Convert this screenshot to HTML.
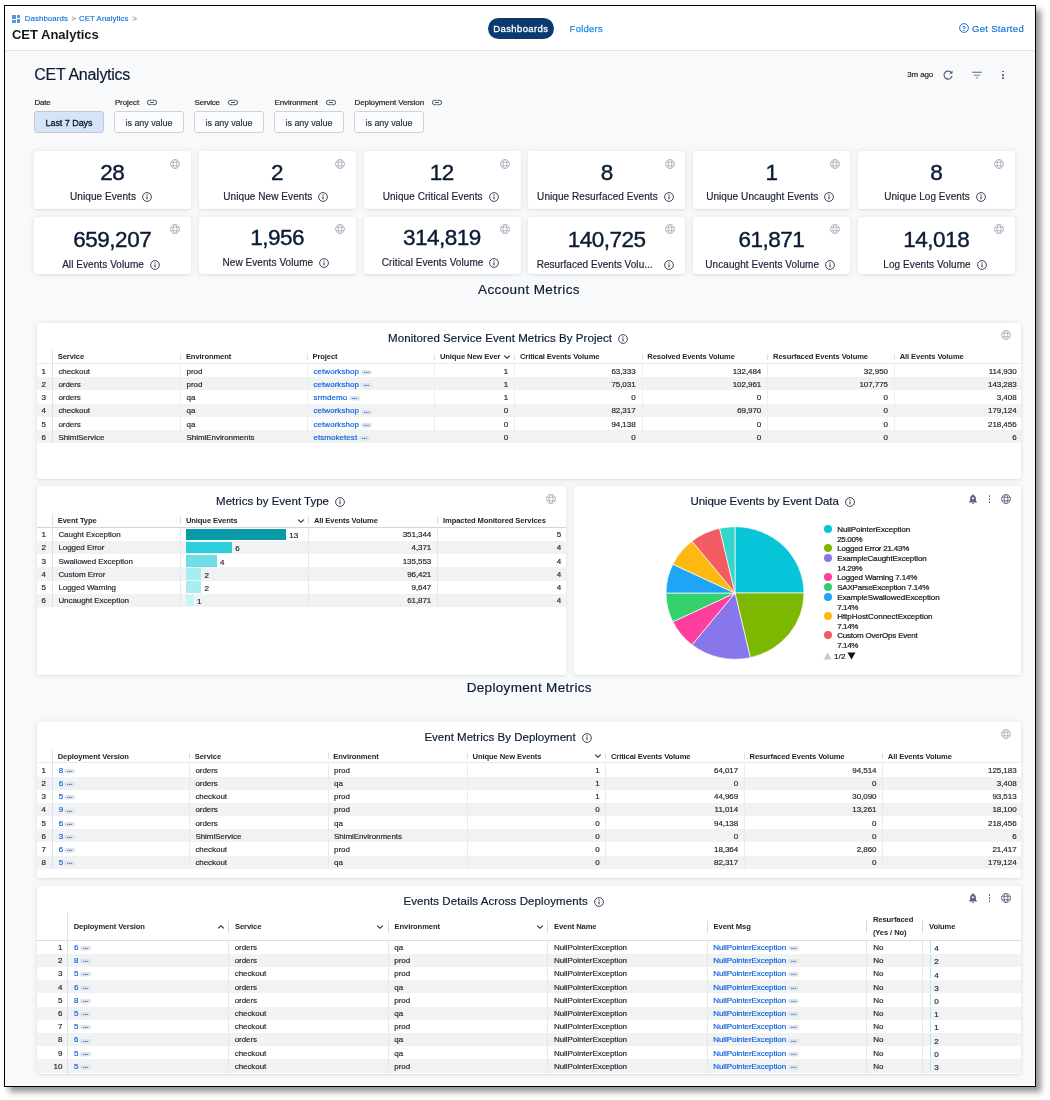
<!DOCTYPE html><html><head><meta charset="utf-8"><title>CET Analytics</title><style>html,body{margin:0;padding:0;background:#fff}body{width:1050px;height:1100px;position:relative;overflow:hidden;font-family:"Liberation Sans", sans-serif;}#tx{position:absolute;left:0;top:0;width:1050px;height:1100px;will-change:transform;-webkit-text-stroke:0.18px}#tx span{position:absolute;white-space:pre}</style></head><body>
<div style="position:absolute;left:4px;top:5px;width:1032px;height:1082px;background:#f8f9fa;box-sizing:border-box;border:1px solid #000;box-shadow:5px 5px 6px rgba(0,0,0,0.42);"></div>
<div style="position:absolute;left:5px;top:6px;width:1030px;height:44px;background:#fff;"></div>
<div style="position:absolute;left:5px;top:50px;width:1030px;height:1px;background:#e4e6ec;"></div>
<div style="position:absolute;left:5px;top:1085px;width:1030px;height:1px;background:#fff;"></div>
<div style="position:absolute;left:12px;top:15px;width:3.6px;height:3.6px;background:#5596e6;"></div>
<div style="position:absolute;left:12px;top:19.6px;width:3.6px;height:3.4px;background:#5596e6;"></div>
<div style="position:absolute;left:16.6px;top:15px;width:3.4px;height:2.6px;background:#5596e6;"></div>
<div style="position:absolute;left:16.6px;top:18.6px;width:3.4px;height:4.4px;background:#5596e6;"></div>
<div style="position:absolute;left:488px;top:18px;width:66px;height:21px;background:#0b3a70;border-radius:10.5px;"></div>
<svg style="position:absolute;left:957.80px;top:22.20px;" width="12" height="12" viewBox="0 0 12 12"><circle cx="6" cy="6" r="4.4" fill="none" stroke="#1a73d9" stroke-width="1"/></svg>
<svg style="position:absolute;left:941.80px;top:68.60px;" width="12" height="12" viewBox="0 0 12 12"><path d="M9.6 4.2A4 4 0 1 0 10 6.8" fill="none" stroke="#59627c" stroke-width="1.15"/><path d="M10.5 1.5V4.7H7.3z" fill="#59627c"/></svg>
<svg style="position:absolute;left:970.70px;top:69.50px;" width="12" height="10" viewBox="0 0 12 10"><path d="M1.3 2.3H10.7" stroke="#7a839b" stroke-width="1.3" fill="none"/><path d="M2.7 5.2H9.3M4.9 7.9H7.1" stroke="#7a839b" stroke-width="1" fill="none"/></svg>
<div style="position:absolute;left:1001.85px;top:70.75px;width:1.7px;height:1.7px;background:#525b75;border-radius:50%;"></div>
<div style="position:absolute;left:1001.85px;top:73.95px;width:1.7px;height:1.7px;background:#525b75;border-radius:50%;"></div>
<div style="position:absolute;left:1001.85px;top:77.15px;width:1.7px;height:1.7px;background:#525b75;border-radius:50%;"></div>
<div style="position:absolute;left:34px;top:111px;width:70px;height:22px;background:#d5e4f7;box-sizing:border-box;border:1px solid #c3c6cb;border-radius:3px;"></div>
<svg style="position:absolute;left:146.10px;top:98.90px;" width="12" height="7" viewBox="0 0 12 7"><g fill="none" stroke="#3a4252" stroke-width="0.95"><path d="M5.6 1.3H3.6a2.2 2.2 0 0 0 0 4.4H5.6M6.4 1.3h2a2.2 2.2 0 0 1 0 4.4H6.4M4.1 3.5h3.8"/></g></svg>
<div style="position:absolute;left:114px;top:111px;width:70px;height:22px;background:#fbfcfd;box-sizing:border-box;border:1px solid #cfd2d7;border-radius:3px;"></div>
<svg style="position:absolute;left:226.90px;top:98.90px;" width="12" height="7" viewBox="0 0 12 7"><g fill="none" stroke="#3a4252" stroke-width="0.95"><path d="M5.6 1.3H3.6a2.2 2.2 0 0 0 0 4.4H5.6M6.4 1.3h2a2.2 2.2 0 0 1 0 4.4H6.4M4.1 3.5h3.8"/></g></svg>
<div style="position:absolute;left:194px;top:111px;width:70px;height:22px;background:#fbfcfd;box-sizing:border-box;border:1px solid #cfd2d7;border-radius:3px;"></div>
<svg style="position:absolute;left:324.90px;top:98.90px;" width="12" height="7" viewBox="0 0 12 7"><g fill="none" stroke="#3a4252" stroke-width="0.95"><path d="M5.6 1.3H3.6a2.2 2.2 0 0 0 0 4.4H5.6M6.4 1.3h2a2.2 2.2 0 0 1 0 4.4H6.4M4.1 3.5h3.8"/></g></svg>
<div style="position:absolute;left:274px;top:111px;width:70px;height:22px;background:#fbfcfd;box-sizing:border-box;border:1px solid #cfd2d7;border-radius:3px;"></div>
<svg style="position:absolute;left:431.10px;top:98.90px;" width="12" height="7" viewBox="0 0 12 7"><g fill="none" stroke="#3a4252" stroke-width="0.95"><path d="M5.6 1.3H3.6a2.2 2.2 0 0 0 0 4.4H5.6M6.4 1.3h2a2.2 2.2 0 0 1 0 4.4H6.4M4.1 3.5h3.8"/></g></svg>
<div style="position:absolute;left:354px;top:111px;width:70px;height:22px;background:#fbfcfd;box-sizing:border-box;border:1px solid #cfd2d7;border-radius:3px;"></div>
<div style="position:absolute;left:34.0px;top:151px;width:157px;height:58px;background:#fff;border-radius:3px;box-shadow:0 0 6px rgba(50,55,50,0.09),0 1px 2px rgba(50,55,50,0.08);"></div>
<svg style="position:absolute;left:169.30px;top:157.70px;" width="12" height="12" viewBox="0 0 12 12"><g fill="none" stroke="#a9b0be" stroke-width="0.85"><circle cx="6" cy="6" r="4.5"/><ellipse cx="6" cy="6" rx="1.9" ry="4.5"/><path d="M2 4.3H10M2 7.7H10"/></g></svg>
<div style="position:absolute;left:198.8px;top:151px;width:157px;height:58px;background:#fff;border-radius:3px;box-shadow:0 0 6px rgba(50,55,50,0.09),0 1px 2px rgba(50,55,50,0.08);"></div>
<svg style="position:absolute;left:334.10px;top:157.70px;" width="12" height="12" viewBox="0 0 12 12"><g fill="none" stroke="#a9b0be" stroke-width="0.85"><circle cx="6" cy="6" r="4.5"/><ellipse cx="6" cy="6" rx="1.9" ry="4.5"/><path d="M2 4.3H10M2 7.7H10"/></g></svg>
<div style="position:absolute;left:363.6px;top:151px;width:157px;height:58px;background:#fff;border-radius:3px;box-shadow:0 0 6px rgba(50,55,50,0.09),0 1px 2px rgba(50,55,50,0.08);"></div>
<svg style="position:absolute;left:498.90px;top:157.70px;" width="12" height="12" viewBox="0 0 12 12"><g fill="none" stroke="#a9b0be" stroke-width="0.85"><circle cx="6" cy="6" r="4.5"/><ellipse cx="6" cy="6" rx="1.9" ry="4.5"/><path d="M2 4.3H10M2 7.7H10"/></g></svg>
<div style="position:absolute;left:528.4px;top:151px;width:157px;height:58px;background:#fff;border-radius:3px;box-shadow:0 0 6px rgba(50,55,50,0.09),0 1px 2px rgba(50,55,50,0.08);"></div>
<svg style="position:absolute;left:663.70px;top:157.70px;" width="12" height="12" viewBox="0 0 12 12"><g fill="none" stroke="#a9b0be" stroke-width="0.85"><circle cx="6" cy="6" r="4.5"/><ellipse cx="6" cy="6" rx="1.9" ry="4.5"/><path d="M2 4.3H10M2 7.7H10"/></g></svg>
<div style="position:absolute;left:693.2px;top:151px;width:157px;height:58px;background:#fff;border-radius:3px;box-shadow:0 0 6px rgba(50,55,50,0.09),0 1px 2px rgba(50,55,50,0.08);"></div>
<svg style="position:absolute;left:828.50px;top:157.70px;" width="12" height="12" viewBox="0 0 12 12"><g fill="none" stroke="#a9b0be" stroke-width="0.85"><circle cx="6" cy="6" r="4.5"/><ellipse cx="6" cy="6" rx="1.9" ry="4.5"/><path d="M2 4.3H10M2 7.7H10"/></g></svg>
<div style="position:absolute;left:858.0px;top:151px;width:157px;height:58px;background:#fff;border-radius:3px;box-shadow:0 0 6px rgba(50,55,50,0.09),0 1px 2px rgba(50,55,50,0.08);"></div>
<svg style="position:absolute;left:993.30px;top:157.70px;" width="12" height="12" viewBox="0 0 12 12"><g fill="none" stroke="#a9b0be" stroke-width="0.85"><circle cx="6" cy="6" r="4.5"/><ellipse cx="6" cy="6" rx="1.9" ry="4.5"/><path d="M2 4.3H10M2 7.7H10"/></g></svg>
<div style="position:absolute;left:34.0px;top:217px;width:157px;height:57px;background:#fff;border-radius:3px;box-shadow:0 0 6px rgba(50,55,50,0.09),0 1px 2px rgba(50,55,50,0.08);"></div>
<svg style="position:absolute;left:169.30px;top:223.00px;" width="12" height="12" viewBox="0 0 12 12"><g fill="none" stroke="#a9b0be" stroke-width="0.85"><circle cx="6" cy="6" r="4.5"/><ellipse cx="6" cy="6" rx="1.9" ry="4.5"/><path d="M2 4.3H10M2 7.7H10"/></g></svg>
<div style="position:absolute;left:198.8px;top:217px;width:157px;height:57px;background:#fff;border-radius:3px;box-shadow:0 0 6px rgba(50,55,50,0.09),0 1px 2px rgba(50,55,50,0.08);"></div>
<svg style="position:absolute;left:334.10px;top:223.00px;" width="12" height="12" viewBox="0 0 12 12"><g fill="none" stroke="#a9b0be" stroke-width="0.85"><circle cx="6" cy="6" r="4.5"/><ellipse cx="6" cy="6" rx="1.9" ry="4.5"/><path d="M2 4.3H10M2 7.7H10"/></g></svg>
<div style="position:absolute;left:363.6px;top:217px;width:157px;height:57px;background:#fff;border-radius:3px;box-shadow:0 0 6px rgba(50,55,50,0.09),0 1px 2px rgba(50,55,50,0.08);"></div>
<svg style="position:absolute;left:498.90px;top:223.00px;" width="12" height="12" viewBox="0 0 12 12"><g fill="none" stroke="#a9b0be" stroke-width="0.85"><circle cx="6" cy="6" r="4.5"/><ellipse cx="6" cy="6" rx="1.9" ry="4.5"/><path d="M2 4.3H10M2 7.7H10"/></g></svg>
<div style="position:absolute;left:528.4px;top:217px;width:157px;height:57px;background:#fff;border-radius:3px;box-shadow:0 0 6px rgba(50,55,50,0.09),0 1px 2px rgba(50,55,50,0.08);"></div>
<svg style="position:absolute;left:663.40px;top:258.60px;" width="12" height="12" viewBox="0 0 12 12"><circle cx="6" cy="6" r="4.4" fill="none" stroke="#0b1a33" stroke-width="0.8"/><path d="M6 5.4V8.3" stroke="#0b1a33" stroke-width="0.95"/><circle cx="6" cy="3.9" r="0.55" fill="#0b1a33"/></svg>
<svg style="position:absolute;left:663.70px;top:223.00px;" width="12" height="12" viewBox="0 0 12 12"><g fill="none" stroke="#a9b0be" stroke-width="0.85"><circle cx="6" cy="6" r="4.5"/><ellipse cx="6" cy="6" rx="1.9" ry="4.5"/><path d="M2 4.3H10M2 7.7H10"/></g></svg>
<div style="position:absolute;left:693.2px;top:217px;width:157px;height:57px;background:#fff;border-radius:3px;box-shadow:0 0 6px rgba(50,55,50,0.09),0 1px 2px rgba(50,55,50,0.08);"></div>
<svg style="position:absolute;left:828.50px;top:223.00px;" width="12" height="12" viewBox="0 0 12 12"><g fill="none" stroke="#a9b0be" stroke-width="0.85"><circle cx="6" cy="6" r="4.5"/><ellipse cx="6" cy="6" rx="1.9" ry="4.5"/><path d="M2 4.3H10M2 7.7H10"/></g></svg>
<div style="position:absolute;left:858.0px;top:217px;width:157px;height:57px;background:#fff;border-radius:3px;box-shadow:0 0 6px rgba(50,55,50,0.09),0 1px 2px rgba(50,55,50,0.08);"></div>
<svg style="position:absolute;left:993.30px;top:223.00px;" width="12" height="12" viewBox="0 0 12 12"><g fill="none" stroke="#a9b0be" stroke-width="0.85"><circle cx="6" cy="6" r="4.5"/><ellipse cx="6" cy="6" rx="1.9" ry="4.5"/><path d="M2 4.3H10M2 7.7H10"/></g></svg>
<div style="position:absolute;left:37px;top:323px;width:984px;height:156px;background:#fff;border-radius:3px;box-shadow:0 0 6px rgba(50,55,50,0.09),0 1px 2px rgba(50,55,50,0.08);"></div>
<svg style="position:absolute;left:617.10px;top:332.70px;" width="12" height="12" viewBox="0 0 12 12"><circle cx="6" cy="6" r="4.4" fill="none" stroke="#0b1a33" stroke-width="0.8"/><path d="M6 5.4V8.3" stroke="#0b1a33" stroke-width="0.95"/><circle cx="6" cy="3.9" r="0.55" fill="#0b1a33"/></svg>
<div style="position:absolute;left:37px;top:363.1px;width:984px;height:1px;background:#e9ebee;"></div>
<div style="position:absolute;left:37px;top:377.2px;width:984px;height:13.2px;background:#f0f2f3;"></div>
<div style="position:absolute;left:37px;top:403.6px;width:984px;height:13.2px;background:#f0f2f3;"></div>
<div style="position:absolute;left:37px;top:430.0px;width:984px;height:13.2px;background:#f0f2f3;"></div>
<div style="position:absolute;left:51.9px;top:350.3px;width:1px;height:92.9px;background:#dfe2e6;"></div>
<div style="position:absolute;left:180.1px;top:353.55px;width:1px;height:6.8px;background:#dfe2e7;"></div>
<div style="position:absolute;left:180.1px;top:364.1px;width:1px;height:79.1px;background:#eceef1;"></div>
<div style="position:absolute;left:306.7px;top:353.55px;width:1px;height:6.8px;background:#dfe2e7;"></div>
<div style="position:absolute;left:306.7px;top:364.1px;width:1px;height:79.1px;background:#eceef1;"></div>
<div style="position:absolute;left:434.1px;top:353.55px;width:1px;height:6.8px;background:#dfe2e7;"></div>
<div style="position:absolute;left:434.1px;top:364.1px;width:1px;height:79.1px;background:#eceef1;"></div>
<div style="position:absolute;left:514.1px;top:353.55px;width:1px;height:6.8px;background:#dfe2e7;"></div>
<div style="position:absolute;left:514.1px;top:364.1px;width:1px;height:79.1px;background:#eceef1;"></div>
<div style="position:absolute;left:641.5px;top:353.55px;width:1px;height:6.8px;background:#dfe2e7;"></div>
<div style="position:absolute;left:641.5px;top:364.1px;width:1px;height:79.1px;background:#eceef1;"></div>
<div style="position:absolute;left:767.2px;top:353.55px;width:1px;height:6.8px;background:#dfe2e7;"></div>
<div style="position:absolute;left:767.2px;top:364.1px;width:1px;height:79.1px;background:#eceef1;"></div>
<div style="position:absolute;left:893.9px;top:353.55px;width:1px;height:6.8px;background:#dfe2e7;"></div>
<div style="position:absolute;left:893.9px;top:364.1px;width:1px;height:79.1px;background:#eceef1;"></div>
<svg style="position:absolute;left:1000.00px;top:329.30px;" width="12" height="12" viewBox="0 0 12 12"><g fill="none" stroke="#a9b0be" stroke-width="0.85"><circle cx="6" cy="6" r="4.5"/><ellipse cx="6" cy="6" rx="1.9" ry="4.5"/><path d="M2 4.3H10M2 7.7H10"/></g></svg>
<svg style="position:absolute;left:502.50px;top:354.20px;" width="8" height="6" viewBox="0 0 8 6"><path d="M1.3 1.7L4 4.3L6.7 1.7" fill="none" stroke="#222" stroke-width="1.15"/></svg>
<div style="position:absolute;left:37px;top:486px;width:529px;height:188.70000000000005px;background:#fff;border-radius:3px;box-shadow:0 0 6px rgba(50,55,50,0.09),0 1px 2px rgba(50,55,50,0.08);"></div>
<svg style="position:absolute;left:334.00px;top:496.00px;" width="12" height="12" viewBox="0 0 12 12"><circle cx="6" cy="6" r="4.4" fill="none" stroke="#0b1a33" stroke-width="0.8"/><path d="M6 5.4V8.3" stroke="#0b1a33" stroke-width="0.95"/><circle cx="6" cy="3.9" r="0.55" fill="#0b1a33"/></svg>
<div style="position:absolute;left:37px;top:526.9px;width:529px;height:1px;background:#d0d4da;"></div>
<div style="position:absolute;left:37px;top:541.0px;width:529px;height:13.2px;background:#f0f2f3;"></div>
<div style="position:absolute;left:37px;top:567.4px;width:529px;height:13.2px;background:#f0f2f3;"></div>
<div style="position:absolute;left:37px;top:593.8px;width:529px;height:13.2px;background:#f0f2f3;"></div>
<div style="position:absolute;left:51.9px;top:514.2px;width:1px;height:92.8px;background:#dfe2e6;"></div>
<div style="position:absolute;left:180.1px;top:517.4px;width:1px;height:6.8px;background:#d6dae0;"></div>
<div style="position:absolute;left:180.1px;top:527.9px;width:1px;height:79.1px;background:#e6e8ec;"></div>
<div style="position:absolute;left:308.1px;top:517.4px;width:1px;height:6.8px;background:#d6dae0;"></div>
<div style="position:absolute;left:308.1px;top:527.9px;width:1px;height:79.1px;background:#e6e8ec;"></div>
<div style="position:absolute;left:437.2px;top:517.4px;width:1px;height:6.8px;background:#d6dae0;"></div>
<div style="position:absolute;left:437.2px;top:527.9px;width:1px;height:79.1px;background:#e6e8ec;"></div>
<svg style="position:absolute;left:544.50px;top:493.00px;" width="12" height="12" viewBox="0 0 12 12"><g fill="none" stroke="#a9b0be" stroke-width="0.85"><circle cx="6" cy="6" r="4.5"/><ellipse cx="6" cy="6" rx="1.9" ry="4.5"/><path d="M2 4.3H10M2 7.7H10"/></g></svg>
<svg style="position:absolute;left:297.00px;top:517.50px;" width="8" height="6" viewBox="0 0 8 6"><path d="M1.3 1.7L4 4.3L6.7 1.7" fill="none" stroke="#222" stroke-width="1.15"/></svg>
<div style="position:absolute;left:186px;top:528.6px;width:100.0px;height:11.6px;background:#0a9aa8;"></div>
<div style="position:absolute;left:186px;top:541.8px;width:46.2px;height:11.6px;background:#2dcfdc;"></div>
<div style="position:absolute;left:186px;top:555.0px;width:30.8px;height:11.6px;background:#6fdde5;"></div>
<div style="position:absolute;left:186px;top:568.2px;width:15.4px;height:11.6px;background:#a6ecf1;"></div>
<div style="position:absolute;left:186px;top:581.4px;width:15.4px;height:11.6px;background:#a6ecf1;"></div>
<div style="position:absolute;left:186px;top:594.6px;width:7.7px;height:11.6px;background:#c6f6f9;"></div>
<div style="position:absolute;left:574px;top:486px;width:447px;height:188.7px;background:#fff;border-radius:3px;box-shadow:0 0 6px rgba(50,55,50,0.09),0 1px 2px rgba(50,55,50,0.08);"></div>
<svg style="position:absolute;left:843.50px;top:496.10px;" width="12" height="12" viewBox="0 0 12 12"><circle cx="6" cy="6" r="4.4" fill="none" stroke="#0b1a33" stroke-width="0.8"/><path d="M6 5.4V8.3" stroke="#0b1a33" stroke-width="0.95"/><circle cx="6" cy="3.9" r="0.55" fill="#0b1a33"/></svg>
<svg style="position:absolute;left:966.90px;top:492.90px;" width="12" height="12" viewBox="0 0 12 12"><path d="M6 1.2c-.5 0-.8.3-.8.8v.3C3.9 2.7 3.1 3.9 3.1 5.3v2.4L2 8.9v.5h8v-.5L8.9 7.7V5.3c0-1.4-.8-2.6-2.1-3V2c0-.5-.3-.8-.8-.8z" fill="#59627a"/><path d="M5 10h2a1 1 0 0 1-2 0z" fill="#59627a"/><path d="M6 4v2.6M4.7 5.3h2.6" stroke="#fff" stroke-width="0.8"/></svg>
<div style="position:absolute;left:988.55px;top:495.15px;width:1.7px;height:1.7px;background:#525b75;border-radius:50%;"></div>
<div style="position:absolute;left:988.55px;top:498.05px;width:1.7px;height:1.7px;background:#525b75;border-radius:50%;"></div>
<div style="position:absolute;left:988.55px;top:500.95px;width:1.7px;height:1.7px;background:#525b75;border-radius:50%;"></div>
<svg style="position:absolute;left:1000.00px;top:492.60px;" width="12" height="12" viewBox="0 0 12 12"><g fill="none" stroke="#59627a" stroke-width="0.85"><circle cx="6" cy="6" r="4.5"/><ellipse cx="6" cy="6" rx="1.9" ry="4.5"/><path d="M2 4.3H10M2 7.7H10"/></g></svg>
<svg style="position:absolute;left:663.40px;top:523.00px;" width="144" height="140" viewBox="-72 -70 144 140"><path d="M0 0L0.00 -66.30A69 66.3 0 0 1 69.00 -0.00Z" fill="#08c4d8" stroke="#fff" stroke-width="0.7" stroke-linejoin="round"/><path d="M0 0L69.00 -0.00A69 66.3 0 0 1 15.35 64.64Z" fill="#7cb800" stroke="#fff" stroke-width="0.7" stroke-linejoin="round"/><path d="M0 0L15.35 64.64A69 66.3 0 0 1 -43.04 51.82Z" fill="#8877ea" stroke="#fff" stroke-width="0.7" stroke-linejoin="round"/><path d="M0 0L-43.04 51.82A69 66.3 0 0 1 -62.17 28.76Z" fill="#ff3f9f" stroke="#fff" stroke-width="0.7" stroke-linejoin="round"/><path d="M0 0L-62.17 28.76A69 66.3 0 0 1 -69.00 0.00Z" fill="#33d16b" stroke="#fff" stroke-width="0.7" stroke-linejoin="round"/><path d="M0 0L-69.00 0.00A69 66.3 0 0 1 -62.17 -28.76Z" fill="#1fa5f7" stroke="#fff" stroke-width="0.7" stroke-linejoin="round"/><path d="M0 0L-62.17 -28.76A69 66.3 0 0 1 -43.04 -51.82Z" fill="#fdb90f" stroke="#fff" stroke-width="0.7" stroke-linejoin="round"/><path d="M0 0L-43.04 -51.82A69 66.3 0 0 1 -15.39 -64.63Z" fill="#f25c62" stroke="#fff" stroke-width="0.7" stroke-linejoin="round"/><path d="M0 0L-15.39 -64.63A69 66.3 0 0 1 0.00 -66.30Z" fill="#33d6c9" stroke="#fff" stroke-width="0.7" stroke-linejoin="round"/></svg>
<div style="position:absolute;left:824.3px;top:525.0px;width:8px;height:8px;background:#08c4d8;border-radius:50%;"></div>
<div style="position:absolute;left:824.3px;top:543.8px;width:8px;height:8px;background:#7cb800;border-radius:50%;"></div>
<div style="position:absolute;left:824.3px;top:553.6px;width:8px;height:8px;background:#8877ea;border-radius:50%;"></div>
<div style="position:absolute;left:824.3px;top:572.8px;width:8px;height:8px;background:#ff3f9f;border-radius:50%;"></div>
<div style="position:absolute;left:824.3px;top:582.7px;width:8px;height:8px;background:#33d16b;border-radius:50%;"></div>
<div style="position:absolute;left:824.3px;top:592.8px;width:8px;height:8px;background:#1fa5f7;border-radius:50%;"></div>
<div style="position:absolute;left:824.3px;top:611.9px;width:8px;height:8px;background:#fdb90f;border-radius:50%;"></div>
<div style="position:absolute;left:824.3px;top:630.8px;width:8px;height:8px;background:#f25c62;border-radius:50%;"></div>
<svg style="position:absolute;left:823.00px;top:651.50px;" width="9" height="8" viewBox="0 0 9 8"><path d="M0.5 7.5L4.5 0.5L8.5 7.5Z" fill="#c9c9c9"/></svg>
<svg style="position:absolute;left:847.00px;top:652.00px;" width="9" height="8" viewBox="0 0 9 8"><path d="M0.5 0.5L4.5 7.5L8.5 0.5Z" fill="#111"/></svg>
<div style="position:absolute;left:37px;top:722px;width:984px;height:156px;background:#fff;border-radius:3px;box-shadow:0 0 6px rgba(50,55,50,0.09),0 1px 2px rgba(50,55,50,0.08);"></div>
<svg style="position:absolute;left:580.70px;top:731.60px;" width="12" height="12" viewBox="0 0 12 12"><circle cx="6" cy="6" r="4.4" fill="none" stroke="#0b1a33" stroke-width="0.8"/><path d="M6 5.4V8.3" stroke="#0b1a33" stroke-width="0.95"/><circle cx="6" cy="3.9" r="0.55" fill="#0b1a33"/></svg>
<div style="position:absolute;left:37px;top:762.4px;width:984px;height:1px;background:#e8eaed;"></div>
<div style="position:absolute;left:37px;top:776.5px;width:984px;height:13.2px;background:#f0f2f3;"></div>
<div style="position:absolute;left:37px;top:802.9px;width:984px;height:13.2px;background:#f0f2f3;"></div>
<div style="position:absolute;left:37px;top:829.3px;width:984px;height:13.2px;background:#f0f2f3;"></div>
<div style="position:absolute;left:37px;top:855.7px;width:984px;height:13.2px;background:#f0f2f3;"></div>
<div style="position:absolute;left:51.9px;top:749.2px;width:1px;height:119.7px;background:#dfe2e6;"></div>
<div style="position:absolute;left:188.9px;top:752.65px;width:1px;height:6.8px;background:#dde0e5;"></div>
<div style="position:absolute;left:188.9px;top:763.4px;width:1px;height:105.5px;background:#e9ebee;"></div>
<div style="position:absolute;left:327.5px;top:752.65px;width:1px;height:6.8px;background:#dde0e5;"></div>
<div style="position:absolute;left:327.5px;top:763.4px;width:1px;height:105.5px;background:#e9ebee;"></div>
<div style="position:absolute;left:466.8px;top:752.65px;width:1px;height:6.8px;background:#dde0e5;"></div>
<div style="position:absolute;left:466.8px;top:763.4px;width:1px;height:105.5px;background:#e9ebee;"></div>
<div style="position:absolute;left:605.1px;top:752.65px;width:1px;height:6.8px;background:#dde0e5;"></div>
<div style="position:absolute;left:605.1px;top:763.4px;width:1px;height:105.5px;background:#e9ebee;"></div>
<div style="position:absolute;left:743.7px;top:752.65px;width:1px;height:6.8px;background:#dde0e5;"></div>
<div style="position:absolute;left:743.7px;top:763.4px;width:1px;height:105.5px;background:#e9ebee;"></div>
<div style="position:absolute;left:882.0px;top:752.65px;width:1px;height:6.8px;background:#dde0e5;"></div>
<div style="position:absolute;left:882.0px;top:763.4px;width:1px;height:105.5px;background:#e9ebee;"></div>
<svg style="position:absolute;left:1000.00px;top:728.00px;" width="12" height="12" viewBox="0 0 12 12"><g fill="none" stroke="#a9b0be" stroke-width="0.85"><circle cx="6" cy="6" r="4.5"/><ellipse cx="6" cy="6" rx="1.9" ry="4.5"/><path d="M2 4.3H10M2 7.7H10"/></g></svg>
<svg style="position:absolute;left:593.60px;top:753.20px;" width="8" height="6" viewBox="0 0 8 6"><path d="M1.3 1.7L4 4.3L6.7 1.7" fill="none" stroke="#222" stroke-width="1.15"/></svg>
<div style="position:absolute;left:37px;top:886px;width:984px;height:188px;background:#fff;border-radius:3px;box-shadow:0 0 6px rgba(50,55,50,0.09),0 1px 2px rgba(50,55,50,0.08);"></div>
<svg style="position:absolute;left:592.80px;top:895.80px;" width="12" height="12" viewBox="0 0 12 12"><circle cx="6" cy="6" r="4.4" fill="none" stroke="#0b1a33" stroke-width="0.8"/><path d="M6 5.4V8.3" stroke="#0b1a33" stroke-width="0.95"/><circle cx="6" cy="3.9" r="0.55" fill="#0b1a33"/></svg>
<div style="position:absolute;left:37px;top:939.7px;width:984px;height:1px;background:#dcdfe3;"></div>
<div style="position:absolute;left:37px;top:953.8px;width:984px;height:13.2px;background:#f0f2f3;"></div>
<div style="position:absolute;left:37px;top:980.2px;width:984px;height:13.2px;background:#f0f2f3;"></div>
<div style="position:absolute;left:37px;top:1006.6px;width:984px;height:13.2px;background:#f0f2f3;"></div>
<div style="position:absolute;left:37px;top:1033.0px;width:984px;height:13.2px;background:#f0f2f3;"></div>
<div style="position:absolute;left:37px;top:1059.4px;width:984px;height:13.2px;background:#f0f2f3;"></div>
<div style="position:absolute;left:66.9px;top:913.2px;width:1px;height:160.8px;background:#dfe2e6;"></div>
<div style="position:absolute;left:228.2px;top:920.7px;width:1px;height:12px;background:#d6dae0;"></div>
<div style="position:absolute;left:228.2px;top:940.7px;width:1px;height:133.3px;background:#e6e8ec;"></div>
<div style="position:absolute;left:387.8px;top:920.7px;width:1px;height:12px;background:#d6dae0;"></div>
<div style="position:absolute;left:387.8px;top:940.7px;width:1px;height:133.3px;background:#e6e8ec;"></div>
<div style="position:absolute;left:547.2px;top:920.7px;width:1px;height:12px;background:#d6dae0;"></div>
<div style="position:absolute;left:547.2px;top:940.7px;width:1px;height:133.3px;background:#e6e8ec;"></div>
<div style="position:absolute;left:706.8px;top:920.7px;width:1px;height:12px;background:#d6dae0;"></div>
<div style="position:absolute;left:706.8px;top:940.7px;width:1px;height:133.3px;background:#e6e8ec;"></div>
<div style="position:absolute;left:866.2px;top:920.7px;width:1px;height:12px;background:#d6dae0;"></div>
<div style="position:absolute;left:866.2px;top:940.7px;width:1px;height:133.3px;background:#e6e8ec;"></div>
<div style="position:absolute;left:922.2px;top:920.7px;width:1px;height:12px;background:#d6dae0;"></div>
<div style="position:absolute;left:922.2px;top:940.7px;width:1px;height:133.3px;background:#e6e8ec;"></div>
<svg style="position:absolute;left:966.90px;top:892.00px;" width="12" height="12" viewBox="0 0 12 12"><path d="M6 1.2c-.5 0-.8.3-.8.8v.3C3.9 2.7 3.1 3.9 3.1 5.3v2.4L2 8.9v.5h8v-.5L8.9 7.7V5.3c0-1.4-.8-2.6-2.1-3V2c0-.5-.3-.8-.8-.8z" fill="#59627a"/><path d="M5 10h2a1 1 0 0 1-2 0z" fill="#59627a"/><path d="M6 4v2.6M4.7 5.3h2.6" stroke="#fff" stroke-width="0.8"/></svg>
<div style="position:absolute;left:988.55px;top:894.25px;width:1.7px;height:1.7px;background:#525b75;border-radius:50%;"></div>
<div style="position:absolute;left:988.55px;top:897.15px;width:1.7px;height:1.7px;background:#525b75;border-radius:50%;"></div>
<div style="position:absolute;left:988.55px;top:900.05px;width:1.7px;height:1.7px;background:#525b75;border-radius:50%;"></div>
<svg style="position:absolute;left:1000.00px;top:892.00px;" width="12" height="12" viewBox="0 0 12 12"><g fill="none" stroke="#59627a" stroke-width="0.85"><circle cx="6" cy="6" r="4.5"/><ellipse cx="6" cy="6" rx="1.9" ry="4.5"/><path d="M2 4.3H10M2 7.7H10"/></g></svg>
<svg style="position:absolute;left:216.70px;top:923.50px;" width="8" height="6" viewBox="0 0 8 6"><path d="M1.3 4.3L4 1.7L6.7 4.3" fill="none" stroke="#222" stroke-width="1.15"/></svg>
<svg style="position:absolute;left:376.00px;top:924.00px;" width="8" height="6" viewBox="0 0 8 6"><path d="M1.3 1.7L4 4.3L6.7 1.7" fill="none" stroke="#222" stroke-width="1.15"/></svg>
<svg style="position:absolute;left:536.00px;top:924.00px;" width="8" height="6" viewBox="0 0 8 6"><path d="M1.3 1.7L4 4.3L6.7 1.7" fill="none" stroke="#222" stroke-width="1.15"/></svg>
<div style="position:absolute;left:929.6px;top:941.4px;width:1.2px;height:11.6px;background:#a6ecf1;"></div>
<div style="position:absolute;left:929.6px;top:954.6px;width:1.2px;height:11.6px;background:#a6ecf1;"></div>
<div style="position:absolute;left:929.6px;top:967.8px;width:1.2px;height:11.6px;background:#a6ecf1;"></div>
<div style="position:absolute;left:929.6px;top:981.0px;width:1.2px;height:11.6px;background:#a6ecf1;"></div>
<div style="position:absolute;left:929.6px;top:994.2px;width:1.2px;height:11.6px;background:#a6ecf1;"></div>
<div style="position:absolute;left:929.6px;top:1007.4px;width:1.2px;height:11.6px;background:#a6ecf1;"></div>
<div style="position:absolute;left:929.6px;top:1020.6px;width:1.2px;height:11.6px;background:#a6ecf1;"></div>
<div style="position:absolute;left:929.6px;top:1033.8px;width:1.2px;height:11.6px;background:#a6ecf1;"></div>
<div style="position:absolute;left:929.6px;top:1047.0px;width:1.2px;height:11.6px;background:#a6ecf1;"></div>
<div style="position:absolute;left:929.6px;top:1060.2px;width:1.2px;height:11.6px;background:#a6ecf1;"></div>
<svg style="position:absolute;left:140.94px;top:190.70px;" width="12" height="12" viewBox="0 0 12 12"><circle cx="6" cy="6" r="4.4" fill="none" stroke="#0b1a33" stroke-width="0.8"/><path d="M6 5.4V8.3" stroke="#0b1a33" stroke-width="0.95"/><circle cx="6" cy="3.9" r="0.55" fill="#0b1a33"/></svg>
<svg style="position:absolute;left:317.27px;top:190.70px;" width="12" height="12" viewBox="0 0 12 12"><circle cx="6" cy="6" r="4.4" fill="none" stroke="#0b1a33" stroke-width="0.8"/><path d="M6 5.4V8.3" stroke="#0b1a33" stroke-width="0.95"/><circle cx="6" cy="3.9" r="0.55" fill="#0b1a33"/></svg>
<svg style="position:absolute;left:487.52px;top:190.70px;" width="12" height="12" viewBox="0 0 12 12"><circle cx="6" cy="6" r="4.4" fill="none" stroke="#0b1a33" stroke-width="0.8"/><path d="M6 5.4V8.3" stroke="#0b1a33" stroke-width="0.95"/><circle cx="6" cy="3.9" r="0.55" fill="#0b1a33"/></svg>
<svg style="position:absolute;left:662.69px;top:190.70px;" width="12" height="12" viewBox="0 0 12 12"><circle cx="6" cy="6" r="4.4" fill="none" stroke="#0b1a33" stroke-width="0.8"/><path d="M6 5.4V8.3" stroke="#0b1a33" stroke-width="0.95"/><circle cx="6" cy="3.9" r="0.55" fill="#0b1a33"/></svg>
<svg style="position:absolute;left:823.25px;top:190.70px;" width="12" height="12" viewBox="0 0 12 12"><circle cx="6" cy="6" r="4.4" fill="none" stroke="#0b1a33" stroke-width="0.8"/><path d="M6 5.4V8.3" stroke="#0b1a33" stroke-width="0.95"/><circle cx="6" cy="3.9" r="0.55" fill="#0b1a33"/></svg>
<svg style="position:absolute;left:974.82px;top:190.70px;" width="12" height="12" viewBox="0 0 12 12"><circle cx="6" cy="6" r="4.4" fill="none" stroke="#0b1a33" stroke-width="0.8"/><path d="M6 5.4V8.3" stroke="#0b1a33" stroke-width="0.95"/><circle cx="6" cy="3.9" r="0.55" fill="#0b1a33"/></svg>
<svg style="position:absolute;left:148.86px;top:258.70px;" width="12" height="12" viewBox="0 0 12 12"><circle cx="6" cy="6" r="4.4" fill="none" stroke="#0b1a33" stroke-width="0.8"/><path d="M6 5.4V8.3" stroke="#0b1a33" stroke-width="0.95"/><circle cx="6" cy="3.9" r="0.55" fill="#0b1a33"/></svg>
<svg style="position:absolute;left:318.11px;top:256.70px;" width="12" height="12" viewBox="0 0 12 12"><circle cx="6" cy="6" r="4.4" fill="none" stroke="#0b1a33" stroke-width="0.8"/><path d="M6 5.4V8.3" stroke="#0b1a33" stroke-width="0.95"/><circle cx="6" cy="3.9" r="0.55" fill="#0b1a33"/></svg>
<svg style="position:absolute;left:488.36px;top:256.70px;" width="12" height="12" viewBox="0 0 12 12"><circle cx="6" cy="6" r="4.4" fill="none" stroke="#0b1a33" stroke-width="0.8"/><path d="M6 5.4V8.3" stroke="#0b1a33" stroke-width="0.95"/><circle cx="6" cy="3.9" r="0.55" fill="#0b1a33"/></svg>
<svg style="position:absolute;left:824.08px;top:258.70px;" width="12" height="12" viewBox="0 0 12 12"><circle cx="6" cy="6" r="4.4" fill="none" stroke="#0b1a33" stroke-width="0.8"/><path d="M6 5.4V8.3" stroke="#0b1a33" stroke-width="0.95"/><circle cx="6" cy="3.9" r="0.55" fill="#0b1a33"/></svg>
<svg style="position:absolute;left:975.65px;top:258.70px;" width="12" height="12" viewBox="0 0 12 12"><circle cx="6" cy="6" r="4.4" fill="none" stroke="#0b1a33" stroke-width="0.8"/><path d="M6 5.4V8.3" stroke="#0b1a33" stroke-width="0.95"/><circle cx="6" cy="3.9" r="0.55" fill="#0b1a33"/></svg>
<svg style="position:absolute;left:360.92px;top:369.90px;" width="11" height="5" viewBox="0 0 11 5"><rect x="0" y="0" width="11" height="4.6" rx="2.3" fill="#e0e2e6"/><circle cx="3.7" cy="2.4" r="0.62" fill="#2f76e0"/><circle cx="5.5" cy="2.4" r="0.62" fill="#2f76e0"/><circle cx="7.3" cy="2.4" r="0.62" fill="#2f76e0"/></svg>
<svg style="position:absolute;left:360.92px;top:383.10px;" width="11" height="5" viewBox="0 0 11 5"><rect x="0" y="0" width="11" height="4.6" rx="2.3" fill="#e0e2e6"/><circle cx="3.7" cy="2.4" r="0.62" fill="#2f76e0"/><circle cx="5.5" cy="2.4" r="0.62" fill="#2f76e0"/><circle cx="7.3" cy="2.4" r="0.62" fill="#2f76e0"/></svg>
<svg style="position:absolute;left:349.14px;top:396.30px;" width="11" height="5" viewBox="0 0 11 5"><rect x="0" y="0" width="11" height="4.6" rx="2.3" fill="#e0e2e6"/><circle cx="3.7" cy="2.4" r="0.62" fill="#2f76e0"/><circle cx="5.5" cy="2.4" r="0.62" fill="#2f76e0"/><circle cx="7.3" cy="2.4" r="0.62" fill="#2f76e0"/></svg>
<svg style="position:absolute;left:360.92px;top:409.50px;" width="11" height="5" viewBox="0 0 11 5"><rect x="0" y="0" width="11" height="4.6" rx="2.3" fill="#e0e2e6"/><circle cx="3.7" cy="2.4" r="0.62" fill="#2f76e0"/><circle cx="5.5" cy="2.4" r="0.62" fill="#2f76e0"/><circle cx="7.3" cy="2.4" r="0.62" fill="#2f76e0"/></svg>
<svg style="position:absolute;left:360.92px;top:422.70px;" width="11" height="5" viewBox="0 0 11 5"><rect x="0" y="0" width="11" height="4.6" rx="2.3" fill="#e0e2e6"/><circle cx="3.7" cy="2.4" r="0.62" fill="#2f76e0"/><circle cx="5.5" cy="2.4" r="0.62" fill="#2f76e0"/><circle cx="7.3" cy="2.4" r="0.62" fill="#2f76e0"/></svg>
<svg style="position:absolute;left:359.14px;top:435.90px;" width="11" height="5" viewBox="0 0 11 5"><rect x="0" y="0" width="11" height="4.6" rx="2.3" fill="#e0e2e6"/><circle cx="3.7" cy="2.4" r="0.62" fill="#2f76e0"/><circle cx="5.5" cy="2.4" r="0.62" fill="#2f76e0"/><circle cx="7.3" cy="2.4" r="0.62" fill="#2f76e0"/></svg>
<svg style="position:absolute;left:64.45px;top:768.90px;" width="11" height="5" viewBox="0 0 11 5"><rect x="0" y="0" width="11" height="4.6" rx="2.3" fill="#e0e2e6"/><circle cx="3.7" cy="2.4" r="0.62" fill="#2f76e0"/><circle cx="5.5" cy="2.4" r="0.62" fill="#2f76e0"/><circle cx="7.3" cy="2.4" r="0.62" fill="#2f76e0"/></svg>
<svg style="position:absolute;left:64.45px;top:782.12px;" width="11" height="5" viewBox="0 0 11 5"><rect x="0" y="0" width="11" height="4.6" rx="2.3" fill="#e0e2e6"/><circle cx="3.7" cy="2.4" r="0.62" fill="#2f76e0"/><circle cx="5.5" cy="2.4" r="0.62" fill="#2f76e0"/><circle cx="7.3" cy="2.4" r="0.62" fill="#2f76e0"/></svg>
<svg style="position:absolute;left:64.45px;top:795.34px;" width="11" height="5" viewBox="0 0 11 5"><rect x="0" y="0" width="11" height="4.6" rx="2.3" fill="#e0e2e6"/><circle cx="3.7" cy="2.4" r="0.62" fill="#2f76e0"/><circle cx="5.5" cy="2.4" r="0.62" fill="#2f76e0"/><circle cx="7.3" cy="2.4" r="0.62" fill="#2f76e0"/></svg>
<svg style="position:absolute;left:64.45px;top:808.56px;" width="11" height="5" viewBox="0 0 11 5"><rect x="0" y="0" width="11" height="4.6" rx="2.3" fill="#e0e2e6"/><circle cx="3.7" cy="2.4" r="0.62" fill="#2f76e0"/><circle cx="5.5" cy="2.4" r="0.62" fill="#2f76e0"/><circle cx="7.3" cy="2.4" r="0.62" fill="#2f76e0"/></svg>
<svg style="position:absolute;left:64.45px;top:821.78px;" width="11" height="5" viewBox="0 0 11 5"><rect x="0" y="0" width="11" height="4.6" rx="2.3" fill="#e0e2e6"/><circle cx="3.7" cy="2.4" r="0.62" fill="#2f76e0"/><circle cx="5.5" cy="2.4" r="0.62" fill="#2f76e0"/><circle cx="7.3" cy="2.4" r="0.62" fill="#2f76e0"/></svg>
<svg style="position:absolute;left:64.45px;top:835.00px;" width="11" height="5" viewBox="0 0 11 5"><rect x="0" y="0" width="11" height="4.6" rx="2.3" fill="#e0e2e6"/><circle cx="3.7" cy="2.4" r="0.62" fill="#2f76e0"/><circle cx="5.5" cy="2.4" r="0.62" fill="#2f76e0"/><circle cx="7.3" cy="2.4" r="0.62" fill="#2f76e0"/></svg>
<svg style="position:absolute;left:64.45px;top:848.22px;" width="11" height="5" viewBox="0 0 11 5"><rect x="0" y="0" width="11" height="4.6" rx="2.3" fill="#e0e2e6"/><circle cx="3.7" cy="2.4" r="0.62" fill="#2f76e0"/><circle cx="5.5" cy="2.4" r="0.62" fill="#2f76e0"/><circle cx="7.3" cy="2.4" r="0.62" fill="#2f76e0"/></svg>
<svg style="position:absolute;left:64.45px;top:861.44px;" width="11" height="5" viewBox="0 0 11 5"><rect x="0" y="0" width="11" height="4.6" rx="2.3" fill="#e0e2e6"/><circle cx="3.7" cy="2.4" r="0.62" fill="#2f76e0"/><circle cx="5.5" cy="2.4" r="0.62" fill="#2f76e0"/><circle cx="7.3" cy="2.4" r="0.62" fill="#2f76e0"/></svg>
<svg style="position:absolute;left:79.65px;top:946.00px;" width="11" height="5" viewBox="0 0 11 5"><rect x="0" y="0" width="11" height="4.6" rx="2.3" fill="#e0e2e6"/><circle cx="3.7" cy="2.4" r="0.62" fill="#2f76e0"/><circle cx="5.5" cy="2.4" r="0.62" fill="#2f76e0"/><circle cx="7.3" cy="2.4" r="0.62" fill="#2f76e0"/></svg>
<svg style="position:absolute;left:788.00px;top:946.00px;" width="11" height="5" viewBox="0 0 11 5"><rect x="0" y="0" width="11" height="4.6" rx="2.3" fill="#e0e2e6"/><circle cx="3.7" cy="2.4" r="0.62" fill="#2f76e0"/><circle cx="5.5" cy="2.4" r="0.62" fill="#2f76e0"/><circle cx="7.3" cy="2.4" r="0.62" fill="#2f76e0"/></svg>
<svg style="position:absolute;left:79.65px;top:959.22px;" width="11" height="5" viewBox="0 0 11 5"><rect x="0" y="0" width="11" height="4.6" rx="2.3" fill="#e0e2e6"/><circle cx="3.7" cy="2.4" r="0.62" fill="#2f76e0"/><circle cx="5.5" cy="2.4" r="0.62" fill="#2f76e0"/><circle cx="7.3" cy="2.4" r="0.62" fill="#2f76e0"/></svg>
<svg style="position:absolute;left:788.00px;top:959.22px;" width="11" height="5" viewBox="0 0 11 5"><rect x="0" y="0" width="11" height="4.6" rx="2.3" fill="#e0e2e6"/><circle cx="3.7" cy="2.4" r="0.62" fill="#2f76e0"/><circle cx="5.5" cy="2.4" r="0.62" fill="#2f76e0"/><circle cx="7.3" cy="2.4" r="0.62" fill="#2f76e0"/></svg>
<svg style="position:absolute;left:79.65px;top:972.44px;" width="11" height="5" viewBox="0 0 11 5"><rect x="0" y="0" width="11" height="4.6" rx="2.3" fill="#e0e2e6"/><circle cx="3.7" cy="2.4" r="0.62" fill="#2f76e0"/><circle cx="5.5" cy="2.4" r="0.62" fill="#2f76e0"/><circle cx="7.3" cy="2.4" r="0.62" fill="#2f76e0"/></svg>
<svg style="position:absolute;left:788.00px;top:972.44px;" width="11" height="5" viewBox="0 0 11 5"><rect x="0" y="0" width="11" height="4.6" rx="2.3" fill="#e0e2e6"/><circle cx="3.7" cy="2.4" r="0.62" fill="#2f76e0"/><circle cx="5.5" cy="2.4" r="0.62" fill="#2f76e0"/><circle cx="7.3" cy="2.4" r="0.62" fill="#2f76e0"/></svg>
<svg style="position:absolute;left:79.65px;top:985.66px;" width="11" height="5" viewBox="0 0 11 5"><rect x="0" y="0" width="11" height="4.6" rx="2.3" fill="#e0e2e6"/><circle cx="3.7" cy="2.4" r="0.62" fill="#2f76e0"/><circle cx="5.5" cy="2.4" r="0.62" fill="#2f76e0"/><circle cx="7.3" cy="2.4" r="0.62" fill="#2f76e0"/></svg>
<svg style="position:absolute;left:788.00px;top:985.66px;" width="11" height="5" viewBox="0 0 11 5"><rect x="0" y="0" width="11" height="4.6" rx="2.3" fill="#e0e2e6"/><circle cx="3.7" cy="2.4" r="0.62" fill="#2f76e0"/><circle cx="5.5" cy="2.4" r="0.62" fill="#2f76e0"/><circle cx="7.3" cy="2.4" r="0.62" fill="#2f76e0"/></svg>
<svg style="position:absolute;left:79.65px;top:998.88px;" width="11" height="5" viewBox="0 0 11 5"><rect x="0" y="0" width="11" height="4.6" rx="2.3" fill="#e0e2e6"/><circle cx="3.7" cy="2.4" r="0.62" fill="#2f76e0"/><circle cx="5.5" cy="2.4" r="0.62" fill="#2f76e0"/><circle cx="7.3" cy="2.4" r="0.62" fill="#2f76e0"/></svg>
<svg style="position:absolute;left:788.00px;top:998.88px;" width="11" height="5" viewBox="0 0 11 5"><rect x="0" y="0" width="11" height="4.6" rx="2.3" fill="#e0e2e6"/><circle cx="3.7" cy="2.4" r="0.62" fill="#2f76e0"/><circle cx="5.5" cy="2.4" r="0.62" fill="#2f76e0"/><circle cx="7.3" cy="2.4" r="0.62" fill="#2f76e0"/></svg>
<svg style="position:absolute;left:79.65px;top:1012.10px;" width="11" height="5" viewBox="0 0 11 5"><rect x="0" y="0" width="11" height="4.6" rx="2.3" fill="#e0e2e6"/><circle cx="3.7" cy="2.4" r="0.62" fill="#2f76e0"/><circle cx="5.5" cy="2.4" r="0.62" fill="#2f76e0"/><circle cx="7.3" cy="2.4" r="0.62" fill="#2f76e0"/></svg>
<svg style="position:absolute;left:788.00px;top:1012.10px;" width="11" height="5" viewBox="0 0 11 5"><rect x="0" y="0" width="11" height="4.6" rx="2.3" fill="#e0e2e6"/><circle cx="3.7" cy="2.4" r="0.62" fill="#2f76e0"/><circle cx="5.5" cy="2.4" r="0.62" fill="#2f76e0"/><circle cx="7.3" cy="2.4" r="0.62" fill="#2f76e0"/></svg>
<svg style="position:absolute;left:79.65px;top:1025.32px;" width="11" height="5" viewBox="0 0 11 5"><rect x="0" y="0" width="11" height="4.6" rx="2.3" fill="#e0e2e6"/><circle cx="3.7" cy="2.4" r="0.62" fill="#2f76e0"/><circle cx="5.5" cy="2.4" r="0.62" fill="#2f76e0"/><circle cx="7.3" cy="2.4" r="0.62" fill="#2f76e0"/></svg>
<svg style="position:absolute;left:788.00px;top:1025.32px;" width="11" height="5" viewBox="0 0 11 5"><rect x="0" y="0" width="11" height="4.6" rx="2.3" fill="#e0e2e6"/><circle cx="3.7" cy="2.4" r="0.62" fill="#2f76e0"/><circle cx="5.5" cy="2.4" r="0.62" fill="#2f76e0"/><circle cx="7.3" cy="2.4" r="0.62" fill="#2f76e0"/></svg>
<svg style="position:absolute;left:79.65px;top:1038.54px;" width="11" height="5" viewBox="0 0 11 5"><rect x="0" y="0" width="11" height="4.6" rx="2.3" fill="#e0e2e6"/><circle cx="3.7" cy="2.4" r="0.62" fill="#2f76e0"/><circle cx="5.5" cy="2.4" r="0.62" fill="#2f76e0"/><circle cx="7.3" cy="2.4" r="0.62" fill="#2f76e0"/></svg>
<svg style="position:absolute;left:788.00px;top:1038.54px;" width="11" height="5" viewBox="0 0 11 5"><rect x="0" y="0" width="11" height="4.6" rx="2.3" fill="#e0e2e6"/><circle cx="3.7" cy="2.4" r="0.62" fill="#2f76e0"/><circle cx="5.5" cy="2.4" r="0.62" fill="#2f76e0"/><circle cx="7.3" cy="2.4" r="0.62" fill="#2f76e0"/></svg>
<svg style="position:absolute;left:79.65px;top:1051.76px;" width="11" height="5" viewBox="0 0 11 5"><rect x="0" y="0" width="11" height="4.6" rx="2.3" fill="#e0e2e6"/><circle cx="3.7" cy="2.4" r="0.62" fill="#2f76e0"/><circle cx="5.5" cy="2.4" r="0.62" fill="#2f76e0"/><circle cx="7.3" cy="2.4" r="0.62" fill="#2f76e0"/></svg>
<svg style="position:absolute;left:788.00px;top:1051.76px;" width="11" height="5" viewBox="0 0 11 5"><rect x="0" y="0" width="11" height="4.6" rx="2.3" fill="#e0e2e6"/><circle cx="3.7" cy="2.4" r="0.62" fill="#2f76e0"/><circle cx="5.5" cy="2.4" r="0.62" fill="#2f76e0"/><circle cx="7.3" cy="2.4" r="0.62" fill="#2f76e0"/></svg>
<svg style="position:absolute;left:79.65px;top:1064.98px;" width="11" height="5" viewBox="0 0 11 5"><rect x="0" y="0" width="11" height="4.6" rx="2.3" fill="#e0e2e6"/><circle cx="3.7" cy="2.4" r="0.62" fill="#2f76e0"/><circle cx="5.5" cy="2.4" r="0.62" fill="#2f76e0"/><circle cx="7.3" cy="2.4" r="0.62" fill="#2f76e0"/></svg>
<svg style="position:absolute;left:788.00px;top:1064.98px;" width="11" height="5" viewBox="0 0 11 5"><rect x="0" y="0" width="11" height="4.6" rx="2.3" fill="#e0e2e6"/><circle cx="3.7" cy="2.4" r="0.62" fill="#2f76e0"/><circle cx="5.5" cy="2.4" r="0.62" fill="#2f76e0"/><circle cx="7.3" cy="2.4" r="0.62" fill="#2f76e0"/></svg>
<div id="tx">
<span style="left:24.80px;top:14px;font-size:7.8px;line-height:10px;color:#1a73d9;letter-spacing:0.105px;">Dashboards</span>
<span style="left:71.50px;top:14px;font-size:7.8px;line-height:10px;color:#8a8f98;">&gt;</span>
<span style="left:79.10px;top:14px;font-size:7.8px;line-height:10px;color:#1a73d9;letter-spacing:0.085px;">CET Analytics</span>
<span style="left:132.50px;top:14px;font-size:7.8px;line-height:10px;color:#8a8f98;">&gt;</span>
<span style="left:11.90px;top:27px;font-size:13px;line-height:16px;color:#16181d;font-weight:700;letter-spacing:-0.003px;-webkit-text-stroke:0;">CET Analytics</span>
<span style="left:493.30px;top:23px;font-size:9.5px;line-height:12px;color:#fff;letter-spacing:0.377px;-webkit-text-stroke:0.3px;">Dashboards</span>
<span style="left:569.60px;top:23px;font-size:9.5px;line-height:12px;color:#1a8ae6;letter-spacing:0.245px;-webkit-text-stroke:0.25px;">Folders</span>
<span style="left:961.66px;top:24px;font-size:7px;line-height:9px;color:#1a73d9;font-weight:700;-webkit-text-stroke:0;">?</span>
<span style="left:972.00px;top:23px;font-size:9.5px;line-height:12px;color:#1a73d9;letter-spacing:0.310px;-webkit-text-stroke:0.2px;">Get Started</span>
<span style="left:34.30px;top:65px;font-size:16px;line-height:20px;color:#0b1a33;letter-spacing:-0.277px;">CET Analytics</span>
<span style="left:907.30px;top:70px;font-size:8px;line-height:10px;color:#222;letter-spacing:-0.165px;">3m ago</span>
<span style="left:34.60px;top:98px;font-size:8px;line-height:10px;color:#222;letter-spacing:-0.302px;">Date</span>
<span style="left:45.50px;top:118px;font-size:9px;line-height:11px;color:#101828;letter-spacing:-0.048px;-webkit-text-stroke:0.3px;">Last 7 Days</span>
<span style="left:114.90px;top:98px;font-size:8px;line-height:10px;color:#222;letter-spacing:-0.115px;">Project</span>
<span style="left:125.60px;top:118px;font-size:9px;line-height:11px;color:#2b3038;letter-spacing:-0.061px;">is any value</span>
<span style="left:194.60px;top:98px;font-size:8px;line-height:10px;color:#222;letter-spacing:-0.213px;">Service</span>
<span style="left:205.60px;top:118px;font-size:9px;line-height:11px;color:#2b3038;letter-spacing:-0.061px;">is any value</span>
<span style="left:274.60px;top:98px;font-size:8px;line-height:10px;color:#222;letter-spacing:-0.157px;">Environment</span>
<span style="left:285.60px;top:118px;font-size:9px;line-height:11px;color:#2b3038;letter-spacing:-0.061px;">is any value</span>
<span style="left:354.60px;top:98px;font-size:8px;line-height:10px;color:#222;letter-spacing:-0.122px;">Deployment Version</span>
<span style="left:365.60px;top:118px;font-size:9px;line-height:11px;color:#2b3038;letter-spacing:-0.061px;">is any value</span>
<span style="left:100.23px;top:159px;font-size:22.5px;line-height:28px;color:#0b1a33;letter-spacing:-0.500px;-webkit-text-stroke:0.4px;">28</span>
<span style="left:70.06px;top:190px;font-size:10px;line-height:13px;color:#1a2233;letter-spacing:0.070px;">Unique Events</span>
<span style="left:271.04px;top:159px;font-size:22.5px;line-height:28px;color:#0b1a33;letter-spacing:-0.500px;-webkit-text-stroke:0.4px;">2</span>
<span style="left:223.33px;top:190px;font-size:10px;line-height:13px;color:#1a2233;letter-spacing:0.070px;">Unique New Events</span>
<span style="left:429.83px;top:159px;font-size:22.5px;line-height:28px;color:#0b1a33;letter-spacing:-0.500px;-webkit-text-stroke:0.4px;">12</span>
<span style="left:382.68px;top:190px;font-size:10px;line-height:13px;color:#1a2233;letter-spacing:0.070px;">Unique Critical Events</span>
<span style="left:600.64px;top:159px;font-size:22.5px;line-height:28px;color:#0b1a33;letter-spacing:-0.500px;-webkit-text-stroke:0.4px;">8</span>
<span style="left:537.11px;top:190px;font-size:10px;line-height:13px;color:#1a2233;letter-spacing:0.070px;">Unique Resurfaced Events</span>
<span style="left:765.44px;top:159px;font-size:22.5px;line-height:28px;color:#0b1a33;letter-spacing:-0.500px;-webkit-text-stroke:0.4px;">1</span>
<span style="left:706.15px;top:190px;font-size:10px;line-height:13px;color:#1a2233;letter-spacing:0.070px;">Unique Uncaught Events</span>
<span style="left:930.24px;top:159px;font-size:22.5px;line-height:28px;color:#0b1a33;letter-spacing:-0.500px;-webkit-text-stroke:0.4px;">8</span>
<span style="left:884.18px;top:190px;font-size:10px;line-height:13px;color:#1a2233;letter-spacing:0.070px;">Unique Log Events</span>
<span style="left:73.33px;top:226px;font-size:22.5px;line-height:28px;color:#0b1a33;letter-spacing:-0.500px;-webkit-text-stroke:0.4px;">659,207</span>
<span style="left:62.14px;top:258px;font-size:10px;line-height:13px;color:#1a2233;letter-spacing:0.070px;">All Events Volume</span>
<span style="left:250.14px;top:224px;font-size:22.5px;line-height:28px;color:#0b1a33;letter-spacing:-0.500px;-webkit-text-stroke:0.4px;">1,956</span>
<span style="left:222.49px;top:256px;font-size:10px;line-height:13px;color:#1a2233;letter-spacing:0.070px;">New Events Volume</span>
<span style="left:402.93px;top:224px;font-size:22.5px;line-height:28px;color:#0b1a33;letter-spacing:-0.500px;-webkit-text-stroke:0.4px;">314,819</span>
<span style="left:381.84px;top:256px;font-size:10px;line-height:13px;color:#1a2233;letter-spacing:0.070px;">Critical Events Volume</span>
<span style="left:567.73px;top:226px;font-size:22.5px;line-height:28px;color:#0b1a33;letter-spacing:-0.500px;-webkit-text-stroke:0.4px;">140,725</span>
<span style="left:536.70px;top:258px;font-size:10px;line-height:13px;color:#1a2233;letter-spacing:0.037px;">Resurfaced Events Volu...</span>
<span style="left:738.54px;top:226px;font-size:22.5px;line-height:28px;color:#0b1a33;letter-spacing:-0.500px;-webkit-text-stroke:0.4px;">61,871</span>
<span style="left:705.32px;top:258px;font-size:10px;line-height:13px;color:#1a2233;letter-spacing:0.070px;">Uncaught Events Volume</span>
<span style="left:903.34px;top:226px;font-size:22.5px;line-height:28px;color:#0b1a33;letter-spacing:-0.500px;-webkit-text-stroke:0.4px;">14,018</span>
<span style="left:883.35px;top:258px;font-size:10px;line-height:13px;color:#1a2233;letter-spacing:0.070px;">Log Events Volume</span>
<span style="left:478.00px;top:281px;font-size:13.5px;line-height:17px;color:#0b1a33;letter-spacing:0.398px;">Account Metrics</span>
<span style="left:466.70px;top:679px;font-size:13.5px;line-height:17px;color:#0b1a33;letter-spacing:0.328px;">Deployment Metrics</span>
<span style="left:388.10px;top:331px;font-size:11.5px;line-height:14px;color:#0b1a33;letter-spacing:0.068px;">Monitored Service Event Metrics By Project</span>
<span style="left:57.70px;top:352px;font-size:7.6px;line-height:10px;color:#1d2026;font-weight:700;letter-spacing:-0.100px;-webkit-text-stroke:0;">Service</span>
<span style="left:185.90px;top:352px;font-size:7.6px;line-height:10px;color:#1d2026;font-weight:700;letter-spacing:-0.100px;-webkit-text-stroke:0;">Environment</span>
<span style="left:312.50px;top:352px;font-size:7.6px;line-height:10px;color:#1d2026;font-weight:700;letter-spacing:-0.100px;-webkit-text-stroke:0;">Project</span>
<span style="left:439.90px;top:352px;font-size:7.6px;line-height:10px;color:#1d2026;font-weight:700;letter-spacing:-0.100px;-webkit-text-stroke:0;">Unique New Ever</span>
<span style="left:519.90px;top:352px;font-size:7.6px;line-height:10px;color:#1d2026;font-weight:700;letter-spacing:-0.100px;-webkit-text-stroke:0;">Critical Events Volume</span>
<span style="left:647.30px;top:352px;font-size:7.6px;line-height:10px;color:#1d2026;font-weight:700;letter-spacing:-0.100px;-webkit-text-stroke:0;">Resolved Events Volume</span>
<span style="left:773.00px;top:352px;font-size:7.6px;line-height:10px;color:#1d2026;font-weight:700;letter-spacing:-0.100px;-webkit-text-stroke:0;">Resurfaced Events Volume</span>
<span style="left:899.70px;top:352px;font-size:7.6px;line-height:10px;color:#1d2026;font-weight:700;letter-spacing:-0.100px;-webkit-text-stroke:0;">All Events Volume</span>
<span style="left:41.47px;top:367px;font-size:8px;line-height:10px;color:#1e2227;">1</span>
<span style="left:58.40px;top:367px;font-size:8px;line-height:10px;color:#1e2227;letter-spacing:-0.060px;">checkout</span>
<span style="left:186.60px;top:367px;font-size:8px;line-height:10px;color:#1e2227;letter-spacing:-0.060px;">prod</span>
<span style="left:313.50px;top:367px;font-size:8px;line-height:10px;color:#0b62e0;letter-spacing:0.050px;">cetworkshop</span>
<span style="left:503.75px;top:367px;font-size:8px;line-height:10px;color:#1e2227;letter-spacing:-0.060px;">1</span>
<span style="left:611.43px;top:367px;font-size:8px;line-height:10px;color:#1e2227;letter-spacing:-0.060px;">63,333</span>
<span style="left:732.74px;top:367px;font-size:8px;line-height:10px;color:#1e2227;letter-spacing:-0.060px;">132,484</span>
<span style="left:863.83px;top:367px;font-size:8px;line-height:10px;color:#1e2227;letter-spacing:-0.060px;">32,950</span>
<span style="left:988.63px;top:367px;font-size:8px;line-height:10px;color:#1e2227;letter-spacing:-0.060px;">114,930</span>
<span style="left:41.47px;top:380px;font-size:8px;line-height:10px;color:#1e2227;">2</span>
<span style="left:58.40px;top:380px;font-size:8px;line-height:10px;color:#1e2227;letter-spacing:-0.060px;">orders</span>
<span style="left:186.60px;top:380px;font-size:8px;line-height:10px;color:#1e2227;letter-spacing:-0.060px;">prod</span>
<span style="left:313.50px;top:380px;font-size:8px;line-height:10px;color:#0b62e0;letter-spacing:0.050px;">cetworkshop</span>
<span style="left:503.75px;top:380px;font-size:8px;line-height:10px;color:#1e2227;letter-spacing:-0.060px;">1</span>
<span style="left:611.43px;top:380px;font-size:8px;line-height:10px;color:#1e2227;letter-spacing:-0.060px;">75,031</span>
<span style="left:732.74px;top:380px;font-size:8px;line-height:10px;color:#1e2227;letter-spacing:-0.060px;">102,961</span>
<span style="left:859.44px;top:380px;font-size:8px;line-height:10px;color:#1e2227;letter-spacing:-0.060px;">107,775</span>
<span style="left:988.04px;top:380px;font-size:8px;line-height:10px;color:#1e2227;letter-spacing:-0.060px;">143,283</span>
<span style="left:41.47px;top:393px;font-size:8px;line-height:10px;color:#1e2227;">3</span>
<span style="left:58.40px;top:393px;font-size:8px;line-height:10px;color:#1e2227;letter-spacing:-0.060px;">orders</span>
<span style="left:186.60px;top:393px;font-size:8px;line-height:10px;color:#1e2227;letter-spacing:-0.060px;">qa</span>
<span style="left:313.50px;top:393px;font-size:8px;line-height:10px;color:#0b62e0;letter-spacing:0.050px;">srmdemo</span>
<span style="left:503.75px;top:393px;font-size:8px;line-height:10px;color:#1e2227;letter-spacing:-0.060px;">1</span>
<span style="left:631.15px;top:393px;font-size:8px;line-height:10px;color:#1e2227;letter-spacing:-0.060px;">0</span>
<span style="left:756.85px;top:393px;font-size:8px;line-height:10px;color:#1e2227;letter-spacing:-0.060px;">0</span>
<span style="left:883.55px;top:393px;font-size:8px;line-height:10px;color:#1e2227;letter-spacing:-0.060px;">0</span>
<span style="left:996.81px;top:393px;font-size:8px;line-height:10px;color:#1e2227;letter-spacing:-0.060px;">3,408</span>
<span style="left:41.47px;top:406px;font-size:8px;line-height:10px;color:#1e2227;">4</span>
<span style="left:58.40px;top:406px;font-size:8px;line-height:10px;color:#1e2227;letter-spacing:-0.060px;">checkout</span>
<span style="left:186.60px;top:406px;font-size:8px;line-height:10px;color:#1e2227;letter-spacing:-0.060px;">qa</span>
<span style="left:313.50px;top:406px;font-size:8px;line-height:10px;color:#0b62e0;letter-spacing:0.050px;">cetworkshop</span>
<span style="left:503.75px;top:406px;font-size:8px;line-height:10px;color:#1e2227;letter-spacing:-0.060px;">0</span>
<span style="left:611.43px;top:406px;font-size:8px;line-height:10px;color:#1e2227;letter-spacing:-0.060px;">82,317</span>
<span style="left:737.13px;top:406px;font-size:8px;line-height:10px;color:#1e2227;letter-spacing:-0.060px;">69,970</span>
<span style="left:883.55px;top:406px;font-size:8px;line-height:10px;color:#1e2227;letter-spacing:-0.060px;">0</span>
<span style="left:988.04px;top:406px;font-size:8px;line-height:10px;color:#1e2227;letter-spacing:-0.060px;">179,124</span>
<span style="left:41.47px;top:420px;font-size:8px;line-height:10px;color:#1e2227;">5</span>
<span style="left:58.40px;top:420px;font-size:8px;line-height:10px;color:#1e2227;letter-spacing:-0.060px;">orders</span>
<span style="left:186.60px;top:420px;font-size:8px;line-height:10px;color:#1e2227;letter-spacing:-0.060px;">qa</span>
<span style="left:313.50px;top:420px;font-size:8px;line-height:10px;color:#0b62e0;letter-spacing:0.050px;">cetworkshop</span>
<span style="left:503.75px;top:420px;font-size:8px;line-height:10px;color:#1e2227;letter-spacing:-0.060px;">0</span>
<span style="left:611.43px;top:420px;font-size:8px;line-height:10px;color:#1e2227;letter-spacing:-0.060px;">94,138</span>
<span style="left:756.85px;top:420px;font-size:8px;line-height:10px;color:#1e2227;letter-spacing:-0.060px;">0</span>
<span style="left:883.55px;top:420px;font-size:8px;line-height:10px;color:#1e2227;letter-spacing:-0.060px;">0</span>
<span style="left:988.04px;top:420px;font-size:8px;line-height:10px;color:#1e2227;letter-spacing:-0.060px;">218,456</span>
<span style="left:41.47px;top:433px;font-size:8px;line-height:10px;color:#1e2227;">6</span>
<span style="left:58.40px;top:433px;font-size:8px;line-height:10px;color:#1e2227;letter-spacing:-0.060px;">ShimiService</span>
<span style="left:186.60px;top:433px;font-size:8px;line-height:10px;color:#1e2227;letter-spacing:-0.060px;">ShimiEnvironments</span>
<span style="left:313.50px;top:433px;font-size:8px;line-height:10px;color:#0b62e0;letter-spacing:0.050px;">etsmoketest</span>
<span style="left:503.75px;top:433px;font-size:8px;line-height:10px;color:#1e2227;letter-spacing:-0.060px;">0</span>
<span style="left:631.15px;top:433px;font-size:8px;line-height:10px;color:#1e2227;letter-spacing:-0.060px;">0</span>
<span style="left:756.85px;top:433px;font-size:8px;line-height:10px;color:#1e2227;letter-spacing:-0.060px;">0</span>
<span style="left:883.55px;top:433px;font-size:8px;line-height:10px;color:#1e2227;letter-spacing:-0.060px;">0</span>
<span style="left:1012.15px;top:433px;font-size:8px;line-height:10px;color:#1e2227;letter-spacing:-0.060px;">6</span>
<span style="left:216.10px;top:494px;font-size:11.5px;line-height:14px;color:#0b1a33;letter-spacing:-0.001px;">Metrics by Event Type</span>
<span style="left:57.70px;top:516px;font-size:7.6px;line-height:10px;color:#1d2026;font-weight:700;letter-spacing:-0.100px;-webkit-text-stroke:0;">Event Type</span>
<span style="left:185.90px;top:516px;font-size:7.6px;line-height:10px;color:#1d2026;font-weight:700;letter-spacing:-0.100px;-webkit-text-stroke:0;">Unique Events</span>
<span style="left:313.90px;top:516px;font-size:7.6px;line-height:10px;color:#1d2026;font-weight:700;letter-spacing:-0.100px;-webkit-text-stroke:0;">All Events Volume</span>
<span style="left:443.00px;top:516px;font-size:7.6px;line-height:10px;color:#1d2026;font-weight:700;letter-spacing:-0.100px;-webkit-text-stroke:0;">Impacted Monitored Services</span>
<span style="left:41.47px;top:530px;font-size:8px;line-height:10px;color:#1e2227;">1</span>
<span style="left:58.40px;top:530px;font-size:8px;line-height:10px;color:#1e2227;letter-spacing:-0.060px;">Caught Exception</span>
<span style="left:289.20px;top:531px;font-size:8px;line-height:10px;color:#1e2227;">13</span>
<span style="left:402.74px;top:530px;font-size:8px;line-height:10px;color:#1e2227;letter-spacing:-0.060px;">351,344</span>
<span style="left:556.75px;top:530px;font-size:8px;line-height:10px;color:#1e2227;letter-spacing:-0.060px;">5</span>
<span style="left:41.47px;top:543px;font-size:8px;line-height:10px;color:#1e2227;">2</span>
<span style="left:58.40px;top:543px;font-size:8px;line-height:10px;color:#1e2227;letter-spacing:-0.060px;">Logged Error</span>
<span style="left:235.35px;top:544px;font-size:8px;line-height:10px;color:#1e2227;">6</span>
<span style="left:411.51px;top:543px;font-size:8px;line-height:10px;color:#1e2227;letter-spacing:-0.060px;">4,371</span>
<span style="left:556.75px;top:543px;font-size:8px;line-height:10px;color:#1e2227;letter-spacing:-0.060px;">4</span>
<span style="left:41.47px;top:557px;font-size:8px;line-height:10px;color:#1e2227;">3</span>
<span style="left:58.40px;top:557px;font-size:8px;line-height:10px;color:#1e2227;letter-spacing:-0.060px;">Swallowed Exception</span>
<span style="left:219.97px;top:558px;font-size:8px;line-height:10px;color:#1e2227;">4</span>
<span style="left:402.74px;top:557px;font-size:8px;line-height:10px;color:#1e2227;letter-spacing:-0.060px;">135,553</span>
<span style="left:556.75px;top:557px;font-size:8px;line-height:10px;color:#1e2227;letter-spacing:-0.060px;">4</span>
<span style="left:41.47px;top:570px;font-size:8px;line-height:10px;color:#1e2227;">4</span>
<span style="left:58.40px;top:570px;font-size:8px;line-height:10px;color:#1e2227;letter-spacing:-0.060px;">Custom Error</span>
<span style="left:204.58px;top:571px;font-size:8px;line-height:10px;color:#1e2227;">2</span>
<span style="left:407.13px;top:570px;font-size:8px;line-height:10px;color:#1e2227;letter-spacing:-0.060px;">96,421</span>
<span style="left:556.75px;top:570px;font-size:8px;line-height:10px;color:#1e2227;letter-spacing:-0.060px;">4</span>
<span style="left:41.47px;top:583px;font-size:8px;line-height:10px;color:#1e2227;">5</span>
<span style="left:58.40px;top:583px;font-size:8px;line-height:10px;color:#1e2227;letter-spacing:-0.060px;">Logged Warning</span>
<span style="left:204.58px;top:584px;font-size:8px;line-height:10px;color:#1e2227;">2</span>
<span style="left:411.51px;top:583px;font-size:8px;line-height:10px;color:#1e2227;letter-spacing:-0.060px;">9,647</span>
<span style="left:556.75px;top:583px;font-size:8px;line-height:10px;color:#1e2227;letter-spacing:-0.060px;">4</span>
<span style="left:41.47px;top:596px;font-size:8px;line-height:10px;color:#1e2227;">6</span>
<span style="left:58.40px;top:596px;font-size:8px;line-height:10px;color:#1e2227;letter-spacing:-0.060px;">Uncaught Exception</span>
<span style="left:196.89px;top:597px;font-size:8px;line-height:10px;color:#1e2227;">1</span>
<span style="left:407.13px;top:596px;font-size:8px;line-height:10px;color:#1e2227;letter-spacing:-0.060px;">61,871</span>
<span style="left:556.75px;top:596px;font-size:8px;line-height:10px;color:#1e2227;letter-spacing:-0.060px;">4</span>
<span style="left:690.50px;top:494px;font-size:11.5px;line-height:14px;color:#0b1a33;letter-spacing:-0.075px;">Unique Events by Event Data</span>
<span style="left:837.20px;top:525px;font-size:8px;line-height:10px;color:#15181c;letter-spacing:-0.063px;-webkit-text-stroke:0.22px;">NullPointerException</span>
<span style="left:837.20px;top:535px;font-size:8px;line-height:10px;color:#15181c;letter-spacing:-0.323px;-webkit-text-stroke:0.22px;">25.00%</span>
<span style="left:837.20px;top:544px;font-size:8px;line-height:10px;color:#15181c;letter-spacing:-0.214px;-webkit-text-stroke:0.22px;">Logged Error 21.43%</span>
<span style="left:837.20px;top:554px;font-size:8px;line-height:10px;color:#15181c;letter-spacing:-0.121px;-webkit-text-stroke:0.22px;">ExampleCaughtException</span>
<span style="left:837.20px;top:564px;font-size:8px;line-height:10px;color:#15181c;letter-spacing:-0.323px;-webkit-text-stroke:0.22px;">14.29%</span>
<span style="left:837.20px;top:573px;font-size:8px;line-height:10px;color:#15181c;letter-spacing:-0.166px;-webkit-text-stroke:0.22px;">Logged Warning 7.14%</span>
<span style="left:837.20px;top:583px;font-size:8px;line-height:10px;color:#15181c;letter-spacing:-0.215px;-webkit-text-stroke:0.22px;">SAXParseException 7.14%</span>
<span style="left:837.20px;top:593px;font-size:8px;line-height:10px;color:#15181c;letter-spacing:-0.088px;-webkit-text-stroke:0.22px;">ExampleSwallowedException</span>
<span style="left:837.20px;top:603px;font-size:8px;line-height:10px;color:#15181c;letter-spacing:-0.377px;-webkit-text-stroke:0.22px;">7.14%</span>
<span style="left:837.20px;top:612px;font-size:8px;line-height:10px;color:#15181c;letter-spacing:-0.032px;-webkit-text-stroke:0.22px;">HttpHostConnectException</span>
<span style="left:837.20px;top:622px;font-size:8px;line-height:10px;color:#15181c;letter-spacing:-0.377px;-webkit-text-stroke:0.22px;">7.14%</span>
<span style="left:837.20px;top:631px;font-size:8px;line-height:10px;color:#15181c;letter-spacing:-0.204px;-webkit-text-stroke:0.22px;">Custom OverOps Event</span>
<span style="left:837.20px;top:641px;font-size:8px;line-height:10px;color:#15181c;letter-spacing:-0.377px;-webkit-text-stroke:0.22px;">7.14%</span>
<span style="left:834.00px;top:652px;font-size:8px;line-height:10px;color:#15181c;letter-spacing:0.125px;">1/2</span>
<span style="left:424.40px;top:730px;font-size:11.5px;line-height:14px;color:#0b1a33;letter-spacing:0.017px;">Event Metrics By Deployment</span>
<span style="left:57.70px;top:752px;font-size:7.6px;line-height:10px;color:#1d2026;font-weight:700;letter-spacing:-0.100px;-webkit-text-stroke:0;">Deployment Version</span>
<span style="left:194.70px;top:752px;font-size:7.6px;line-height:10px;color:#1d2026;font-weight:700;letter-spacing:-0.100px;-webkit-text-stroke:0;">Service</span>
<span style="left:333.30px;top:752px;font-size:7.6px;line-height:10px;color:#1d2026;font-weight:700;letter-spacing:-0.100px;-webkit-text-stroke:0;">Environment</span>
<span style="left:472.60px;top:752px;font-size:7.6px;line-height:10px;color:#1d2026;font-weight:700;letter-spacing:-0.100px;-webkit-text-stroke:0;">Unique New Events</span>
<span style="left:610.90px;top:752px;font-size:7.6px;line-height:10px;color:#1d2026;font-weight:700;letter-spacing:-0.100px;-webkit-text-stroke:0;">Critical Events Volume</span>
<span style="left:749.50px;top:752px;font-size:7.6px;line-height:10px;color:#1d2026;font-weight:700;letter-spacing:-0.100px;-webkit-text-stroke:0;">Resurfaced Events Volume</span>
<span style="left:887.80px;top:752px;font-size:7.6px;line-height:10px;color:#1d2026;font-weight:700;letter-spacing:-0.100px;-webkit-text-stroke:0;">All Events Volume</span>
<span style="left:41.47px;top:766px;font-size:8px;line-height:10px;color:#1e2227;">1</span>
<span style="left:58.70px;top:766px;font-size:8px;line-height:10px;color:#0b62e0;letter-spacing:0.050px;">8</span>
<span style="left:195.40px;top:766px;font-size:8px;line-height:10px;color:#1e2227;letter-spacing:-0.060px;">orders</span>
<span style="left:334.00px;top:766px;font-size:8px;line-height:10px;color:#1e2227;letter-spacing:-0.060px;">prod</span>
<span style="left:595.15px;top:766px;font-size:8px;line-height:10px;color:#1e2227;letter-spacing:-0.060px;">1</span>
<span style="left:714.03px;top:766px;font-size:8px;line-height:10px;color:#1e2227;letter-spacing:-0.060px;">64,017</span>
<span style="left:852.33px;top:766px;font-size:8px;line-height:10px;color:#1e2227;letter-spacing:-0.060px;">94,514</span>
<span style="left:988.04px;top:766px;font-size:8px;line-height:10px;color:#1e2227;letter-spacing:-0.060px;">125,183</span>
<span style="left:41.47px;top:779px;font-size:8px;line-height:10px;color:#1e2227;">2</span>
<span style="left:58.70px;top:779px;font-size:8px;line-height:10px;color:#0b62e0;letter-spacing:0.050px;">6</span>
<span style="left:195.40px;top:779px;font-size:8px;line-height:10px;color:#1e2227;letter-spacing:-0.060px;">orders</span>
<span style="left:334.00px;top:779px;font-size:8px;line-height:10px;color:#1e2227;letter-spacing:-0.060px;">qa</span>
<span style="left:595.15px;top:779px;font-size:8px;line-height:10px;color:#1e2227;letter-spacing:-0.060px;">1</span>
<span style="left:733.75px;top:779px;font-size:8px;line-height:10px;color:#1e2227;letter-spacing:-0.060px;">0</span>
<span style="left:872.05px;top:779px;font-size:8px;line-height:10px;color:#1e2227;letter-spacing:-0.060px;">0</span>
<span style="left:996.81px;top:779px;font-size:8px;line-height:10px;color:#1e2227;letter-spacing:-0.060px;">3,408</span>
<span style="left:41.47px;top:792px;font-size:8px;line-height:10px;color:#1e2227;">3</span>
<span style="left:58.70px;top:792px;font-size:8px;line-height:10px;color:#0b62e0;letter-spacing:0.050px;">5</span>
<span style="left:195.40px;top:792px;font-size:8px;line-height:10px;color:#1e2227;letter-spacing:-0.060px;">checkout</span>
<span style="left:334.00px;top:792px;font-size:8px;line-height:10px;color:#1e2227;letter-spacing:-0.060px;">prod</span>
<span style="left:595.15px;top:792px;font-size:8px;line-height:10px;color:#1e2227;letter-spacing:-0.060px;">1</span>
<span style="left:714.03px;top:792px;font-size:8px;line-height:10px;color:#1e2227;letter-spacing:-0.060px;">44,969</span>
<span style="left:852.33px;top:792px;font-size:8px;line-height:10px;color:#1e2227;letter-spacing:-0.060px;">30,090</span>
<span style="left:992.43px;top:792px;font-size:8px;line-height:10px;color:#1e2227;letter-spacing:-0.060px;">93,513</span>
<span style="left:41.47px;top:805px;font-size:8px;line-height:10px;color:#1e2227;">4</span>
<span style="left:58.70px;top:805px;font-size:8px;line-height:10px;color:#0b62e0;letter-spacing:0.050px;">9</span>
<span style="left:195.40px;top:805px;font-size:8px;line-height:10px;color:#1e2227;letter-spacing:-0.060px;">orders</span>
<span style="left:334.00px;top:805px;font-size:8px;line-height:10px;color:#1e2227;letter-spacing:-0.060px;">prod</span>
<span style="left:595.15px;top:805px;font-size:8px;line-height:10px;color:#1e2227;letter-spacing:-0.060px;">0</span>
<span style="left:714.62px;top:805px;font-size:8px;line-height:10px;color:#1e2227;letter-spacing:-0.060px;">11,014</span>
<span style="left:852.33px;top:805px;font-size:8px;line-height:10px;color:#1e2227;letter-spacing:-0.060px;">13,261</span>
<span style="left:992.43px;top:805px;font-size:8px;line-height:10px;color:#1e2227;letter-spacing:-0.060px;">18,100</span>
<span style="left:41.47px;top:819px;font-size:8px;line-height:10px;color:#1e2227;">5</span>
<span style="left:58.70px;top:819px;font-size:8px;line-height:10px;color:#0b62e0;letter-spacing:0.050px;">6</span>
<span style="left:195.40px;top:819px;font-size:8px;line-height:10px;color:#1e2227;letter-spacing:-0.060px;">orders</span>
<span style="left:334.00px;top:819px;font-size:8px;line-height:10px;color:#1e2227;letter-spacing:-0.060px;">qa</span>
<span style="left:595.15px;top:819px;font-size:8px;line-height:10px;color:#1e2227;letter-spacing:-0.060px;">0</span>
<span style="left:714.03px;top:819px;font-size:8px;line-height:10px;color:#1e2227;letter-spacing:-0.060px;">94,138</span>
<span style="left:872.05px;top:819px;font-size:8px;line-height:10px;color:#1e2227;letter-spacing:-0.060px;">0</span>
<span style="left:988.04px;top:819px;font-size:8px;line-height:10px;color:#1e2227;letter-spacing:-0.060px;">218,456</span>
<span style="left:41.47px;top:832px;font-size:8px;line-height:10px;color:#1e2227;">6</span>
<span style="left:58.70px;top:832px;font-size:8px;line-height:10px;color:#0b62e0;letter-spacing:0.050px;">3</span>
<span style="left:195.40px;top:832px;font-size:8px;line-height:10px;color:#1e2227;letter-spacing:-0.060px;">ShimiService</span>
<span style="left:334.00px;top:832px;font-size:8px;line-height:10px;color:#1e2227;letter-spacing:-0.060px;">ShimiEnvironments</span>
<span style="left:595.15px;top:832px;font-size:8px;line-height:10px;color:#1e2227;letter-spacing:-0.060px;">0</span>
<span style="left:733.75px;top:832px;font-size:8px;line-height:10px;color:#1e2227;letter-spacing:-0.060px;">0</span>
<span style="left:872.05px;top:832px;font-size:8px;line-height:10px;color:#1e2227;letter-spacing:-0.060px;">0</span>
<span style="left:1012.15px;top:832px;font-size:8px;line-height:10px;color:#1e2227;letter-spacing:-0.060px;">6</span>
<span style="left:41.47px;top:845px;font-size:8px;line-height:10px;color:#1e2227;">7</span>
<span style="left:58.70px;top:845px;font-size:8px;line-height:10px;color:#0b62e0;letter-spacing:0.050px;">6</span>
<span style="left:195.40px;top:845px;font-size:8px;line-height:10px;color:#1e2227;letter-spacing:-0.060px;">checkout</span>
<span style="left:334.00px;top:845px;font-size:8px;line-height:10px;color:#1e2227;letter-spacing:-0.060px;">prod</span>
<span style="left:595.15px;top:845px;font-size:8px;line-height:10px;color:#1e2227;letter-spacing:-0.060px;">0</span>
<span style="left:714.03px;top:845px;font-size:8px;line-height:10px;color:#1e2227;letter-spacing:-0.060px;">18,364</span>
<span style="left:856.71px;top:845px;font-size:8px;line-height:10px;color:#1e2227;letter-spacing:-0.060px;">2,860</span>
<span style="left:992.43px;top:845px;font-size:8px;line-height:10px;color:#1e2227;letter-spacing:-0.060px;">21,417</span>
<span style="left:41.47px;top:858px;font-size:8px;line-height:10px;color:#1e2227;">8</span>
<span style="left:58.70px;top:858px;font-size:8px;line-height:10px;color:#0b62e0;letter-spacing:0.050px;">5</span>
<span style="left:195.40px;top:858px;font-size:8px;line-height:10px;color:#1e2227;letter-spacing:-0.060px;">checkout</span>
<span style="left:334.00px;top:858px;font-size:8px;line-height:10px;color:#1e2227;letter-spacing:-0.060px;">qa</span>
<span style="left:595.15px;top:858px;font-size:8px;line-height:10px;color:#1e2227;letter-spacing:-0.060px;">0</span>
<span style="left:714.03px;top:858px;font-size:8px;line-height:10px;color:#1e2227;letter-spacing:-0.060px;">82,317</span>
<span style="left:872.05px;top:858px;font-size:8px;line-height:10px;color:#1e2227;letter-spacing:-0.060px;">0</span>
<span style="left:988.04px;top:858px;font-size:8px;line-height:10px;color:#1e2227;letter-spacing:-0.060px;">179,124</span>
<span style="left:403.40px;top:894px;font-size:11.5px;line-height:14px;color:#0b1a33;letter-spacing:0.087px;">Events Details Across Deployments</span>
<span style="left:73.70px;top:922px;font-size:7.6px;line-height:10px;color:#1d2026;font-weight:700;letter-spacing:-0.100px;-webkit-text-stroke:0;">Deployment Version</span>
<span style="left:235.00px;top:922px;font-size:7.6px;line-height:10px;color:#1d2026;font-weight:700;letter-spacing:-0.100px;-webkit-text-stroke:0;">Service</span>
<span style="left:394.60px;top:922px;font-size:7.6px;line-height:10px;color:#1d2026;font-weight:700;letter-spacing:-0.100px;-webkit-text-stroke:0;">Environment</span>
<span style="left:554.00px;top:922px;font-size:7.6px;line-height:10px;color:#1d2026;font-weight:700;letter-spacing:-0.100px;-webkit-text-stroke:0;">Event Name</span>
<span style="left:713.60px;top:922px;font-size:7.6px;line-height:10px;color:#1d2026;font-weight:700;letter-spacing:-0.100px;-webkit-text-stroke:0;">Event Msg</span>
<span style="left:929.00px;top:922px;font-size:7.6px;line-height:10px;color:#1d2026;font-weight:700;letter-spacing:-0.100px;-webkit-text-stroke:0;">Volume</span>
<span style="left:872.90px;top:915px;font-size:7.6px;line-height:10px;color:#1d2026;font-weight:700;letter-spacing:-0.100px;-webkit-text-stroke:0;">Resurfaced</span>
<span style="left:872.90px;top:928px;font-size:7.6px;line-height:10px;color:#1d2026;font-weight:700;letter-spacing:-0.100px;-webkit-text-stroke:0;">(Yes / No)</span>
<span style="left:57.95px;top:943px;font-size:8px;line-height:10px;color:#1e2227;">1</span>
<span style="left:73.90px;top:943px;font-size:8px;line-height:10px;color:#0b62e0;letter-spacing:0.050px;">6</span>
<span style="left:234.70px;top:943px;font-size:8px;line-height:10px;color:#1e2227;letter-spacing:-0.060px;">orders</span>
<span style="left:394.30px;top:943px;font-size:8px;line-height:10px;color:#1e2227;letter-spacing:-0.060px;">qa</span>
<span style="left:554.00px;top:943px;font-size:8px;line-height:10px;color:#1e2227;letter-spacing:-0.063px;">NullPointerException</span>
<span style="left:713.30px;top:943px;font-size:8px;line-height:10px;color:#0b62e0;letter-spacing:-0.078px;">NullPointerException</span>
<span style="left:873.20px;top:943px;font-size:8px;line-height:10px;color:#1e2227;letter-spacing:-0.060px;">No</span>
<span style="left:934.20px;top:944px;font-size:8px;line-height:10px;color:#1e2227;">4</span>
<span style="left:57.95px;top:956px;font-size:8px;line-height:10px;color:#1e2227;">2</span>
<span style="left:73.90px;top:956px;font-size:8px;line-height:10px;color:#0b62e0;letter-spacing:0.050px;">8</span>
<span style="left:234.70px;top:956px;font-size:8px;line-height:10px;color:#1e2227;letter-spacing:-0.060px;">orders</span>
<span style="left:394.30px;top:956px;font-size:8px;line-height:10px;color:#1e2227;letter-spacing:-0.060px;">prod</span>
<span style="left:554.00px;top:956px;font-size:8px;line-height:10px;color:#1e2227;letter-spacing:-0.063px;">NullPointerException</span>
<span style="left:713.30px;top:956px;font-size:8px;line-height:10px;color:#0b62e0;letter-spacing:-0.078px;">NullPointerException</span>
<span style="left:873.20px;top:956px;font-size:8px;line-height:10px;color:#1e2227;letter-spacing:-0.060px;">No</span>
<span style="left:934.20px;top:957px;font-size:8px;line-height:10px;color:#1e2227;">2</span>
<span style="left:57.95px;top:969px;font-size:8px;line-height:10px;color:#1e2227;">3</span>
<span style="left:73.90px;top:969px;font-size:8px;line-height:10px;color:#0b62e0;letter-spacing:0.050px;">5</span>
<span style="left:234.70px;top:969px;font-size:8px;line-height:10px;color:#1e2227;letter-spacing:-0.060px;">checkout</span>
<span style="left:394.30px;top:969px;font-size:8px;line-height:10px;color:#1e2227;letter-spacing:-0.060px;">prod</span>
<span style="left:554.00px;top:969px;font-size:8px;line-height:10px;color:#1e2227;letter-spacing:-0.063px;">NullPointerException</span>
<span style="left:713.30px;top:969px;font-size:8px;line-height:10px;color:#0b62e0;letter-spacing:-0.078px;">NullPointerException</span>
<span style="left:873.20px;top:969px;font-size:8px;line-height:10px;color:#1e2227;letter-spacing:-0.060px;">No</span>
<span style="left:934.20px;top:971px;font-size:8px;line-height:10px;color:#1e2227;">4</span>
<span style="left:57.95px;top:983px;font-size:8px;line-height:10px;color:#1e2227;">4</span>
<span style="left:73.90px;top:983px;font-size:8px;line-height:10px;color:#0b62e0;letter-spacing:0.050px;">6</span>
<span style="left:234.70px;top:983px;font-size:8px;line-height:10px;color:#1e2227;letter-spacing:-0.060px;">orders</span>
<span style="left:394.30px;top:983px;font-size:8px;line-height:10px;color:#1e2227;letter-spacing:-0.060px;">qa</span>
<span style="left:554.00px;top:983px;font-size:8px;line-height:10px;color:#1e2227;letter-spacing:-0.063px;">NullPointerException</span>
<span style="left:713.30px;top:983px;font-size:8px;line-height:10px;color:#0b62e0;letter-spacing:-0.078px;">NullPointerException</span>
<span style="left:873.20px;top:983px;font-size:8px;line-height:10px;color:#1e2227;letter-spacing:-0.060px;">No</span>
<span style="left:934.20px;top:984px;font-size:8px;line-height:10px;color:#1e2227;">3</span>
<span style="left:57.95px;top:996px;font-size:8px;line-height:10px;color:#1e2227;">5</span>
<span style="left:73.90px;top:996px;font-size:8px;line-height:10px;color:#0b62e0;letter-spacing:0.050px;">8</span>
<span style="left:234.70px;top:996px;font-size:8px;line-height:10px;color:#1e2227;letter-spacing:-0.060px;">orders</span>
<span style="left:394.30px;top:996px;font-size:8px;line-height:10px;color:#1e2227;letter-spacing:-0.060px;">prod</span>
<span style="left:554.00px;top:996px;font-size:8px;line-height:10px;color:#1e2227;letter-spacing:-0.063px;">NullPointerException</span>
<span style="left:713.30px;top:996px;font-size:8px;line-height:10px;color:#0b62e0;letter-spacing:-0.078px;">NullPointerException</span>
<span style="left:873.20px;top:996px;font-size:8px;line-height:10px;color:#1e2227;letter-spacing:-0.060px;">No</span>
<span style="left:934.20px;top:997px;font-size:8px;line-height:10px;color:#1e2227;">0</span>
<span style="left:57.95px;top:1009px;font-size:8px;line-height:10px;color:#1e2227;">6</span>
<span style="left:73.90px;top:1009px;font-size:8px;line-height:10px;color:#0b62e0;letter-spacing:0.050px;">5</span>
<span style="left:234.70px;top:1009px;font-size:8px;line-height:10px;color:#1e2227;letter-spacing:-0.060px;">checkout</span>
<span style="left:394.30px;top:1009px;font-size:8px;line-height:10px;color:#1e2227;letter-spacing:-0.060px;">qa</span>
<span style="left:554.00px;top:1009px;font-size:8px;line-height:10px;color:#1e2227;letter-spacing:-0.063px;">NullPointerException</span>
<span style="left:713.30px;top:1009px;font-size:8px;line-height:10px;color:#0b62e0;letter-spacing:-0.078px;">NullPointerException</span>
<span style="left:873.20px;top:1009px;font-size:8px;line-height:10px;color:#1e2227;letter-spacing:-0.060px;">No</span>
<span style="left:934.20px;top:1010px;font-size:8px;line-height:10px;color:#1e2227;">1</span>
<span style="left:57.95px;top:1022px;font-size:8px;line-height:10px;color:#1e2227;">7</span>
<span style="left:73.90px;top:1022px;font-size:8px;line-height:10px;color:#0b62e0;letter-spacing:0.050px;">5</span>
<span style="left:234.70px;top:1022px;font-size:8px;line-height:10px;color:#1e2227;letter-spacing:-0.060px;">checkout</span>
<span style="left:394.30px;top:1022px;font-size:8px;line-height:10px;color:#1e2227;letter-spacing:-0.060px;">prod</span>
<span style="left:554.00px;top:1022px;font-size:8px;line-height:10px;color:#1e2227;letter-spacing:-0.063px;">NullPointerException</span>
<span style="left:713.30px;top:1022px;font-size:8px;line-height:10px;color:#0b62e0;letter-spacing:-0.078px;">NullPointerException</span>
<span style="left:873.20px;top:1022px;font-size:8px;line-height:10px;color:#1e2227;letter-spacing:-0.060px;">No</span>
<span style="left:934.20px;top:1023px;font-size:8px;line-height:10px;color:#1e2227;">1</span>
<span style="left:57.95px;top:1035px;font-size:8px;line-height:10px;color:#1e2227;">8</span>
<span style="left:73.90px;top:1035px;font-size:8px;line-height:10px;color:#0b62e0;letter-spacing:0.050px;">6</span>
<span style="left:234.70px;top:1035px;font-size:8px;line-height:10px;color:#1e2227;letter-spacing:-0.060px;">orders</span>
<span style="left:394.30px;top:1035px;font-size:8px;line-height:10px;color:#1e2227;letter-spacing:-0.060px;">qa</span>
<span style="left:554.00px;top:1035px;font-size:8px;line-height:10px;color:#1e2227;letter-spacing:-0.063px;">NullPointerException</span>
<span style="left:713.30px;top:1035px;font-size:8px;line-height:10px;color:#0b62e0;letter-spacing:-0.078px;">NullPointerException</span>
<span style="left:873.20px;top:1035px;font-size:8px;line-height:10px;color:#1e2227;letter-spacing:-0.060px;">No</span>
<span style="left:934.20px;top:1037px;font-size:8px;line-height:10px;color:#1e2227;">2</span>
<span style="left:57.95px;top:1049px;font-size:8px;line-height:10px;color:#1e2227;">9</span>
<span style="left:73.90px;top:1049px;font-size:8px;line-height:10px;color:#0b62e0;letter-spacing:0.050px;">5</span>
<span style="left:234.70px;top:1049px;font-size:8px;line-height:10px;color:#1e2227;letter-spacing:-0.060px;">checkout</span>
<span style="left:394.30px;top:1049px;font-size:8px;line-height:10px;color:#1e2227;letter-spacing:-0.060px;">qa</span>
<span style="left:554.00px;top:1049px;font-size:8px;line-height:10px;color:#1e2227;letter-spacing:-0.063px;">NullPointerException</span>
<span style="left:713.30px;top:1049px;font-size:8px;line-height:10px;color:#0b62e0;letter-spacing:-0.078px;">NullPointerException</span>
<span style="left:873.20px;top:1049px;font-size:8px;line-height:10px;color:#1e2227;letter-spacing:-0.060px;">No</span>
<span style="left:934.20px;top:1050px;font-size:8px;line-height:10px;color:#1e2227;">0</span>
<span style="left:53.49px;top:1062px;font-size:8px;line-height:10px;color:#1e2227;">10</span>
<span style="left:73.90px;top:1062px;font-size:8px;line-height:10px;color:#0b62e0;letter-spacing:0.050px;">5</span>
<span style="left:234.70px;top:1062px;font-size:8px;line-height:10px;color:#1e2227;letter-spacing:-0.060px;">checkout</span>
<span style="left:394.30px;top:1062px;font-size:8px;line-height:10px;color:#1e2227;letter-spacing:-0.060px;">prod</span>
<span style="left:554.00px;top:1062px;font-size:8px;line-height:10px;color:#1e2227;letter-spacing:-0.063px;">NullPointerException</span>
<span style="left:713.30px;top:1062px;font-size:8px;line-height:10px;color:#0b62e0;letter-spacing:-0.078px;">NullPointerException</span>
<span style="left:873.20px;top:1062px;font-size:8px;line-height:10px;color:#1e2227;letter-spacing:-0.060px;">No</span>
<span style="left:934.20px;top:1063px;font-size:8px;line-height:10px;color:#1e2227;">3</span>
</div></body></html>
